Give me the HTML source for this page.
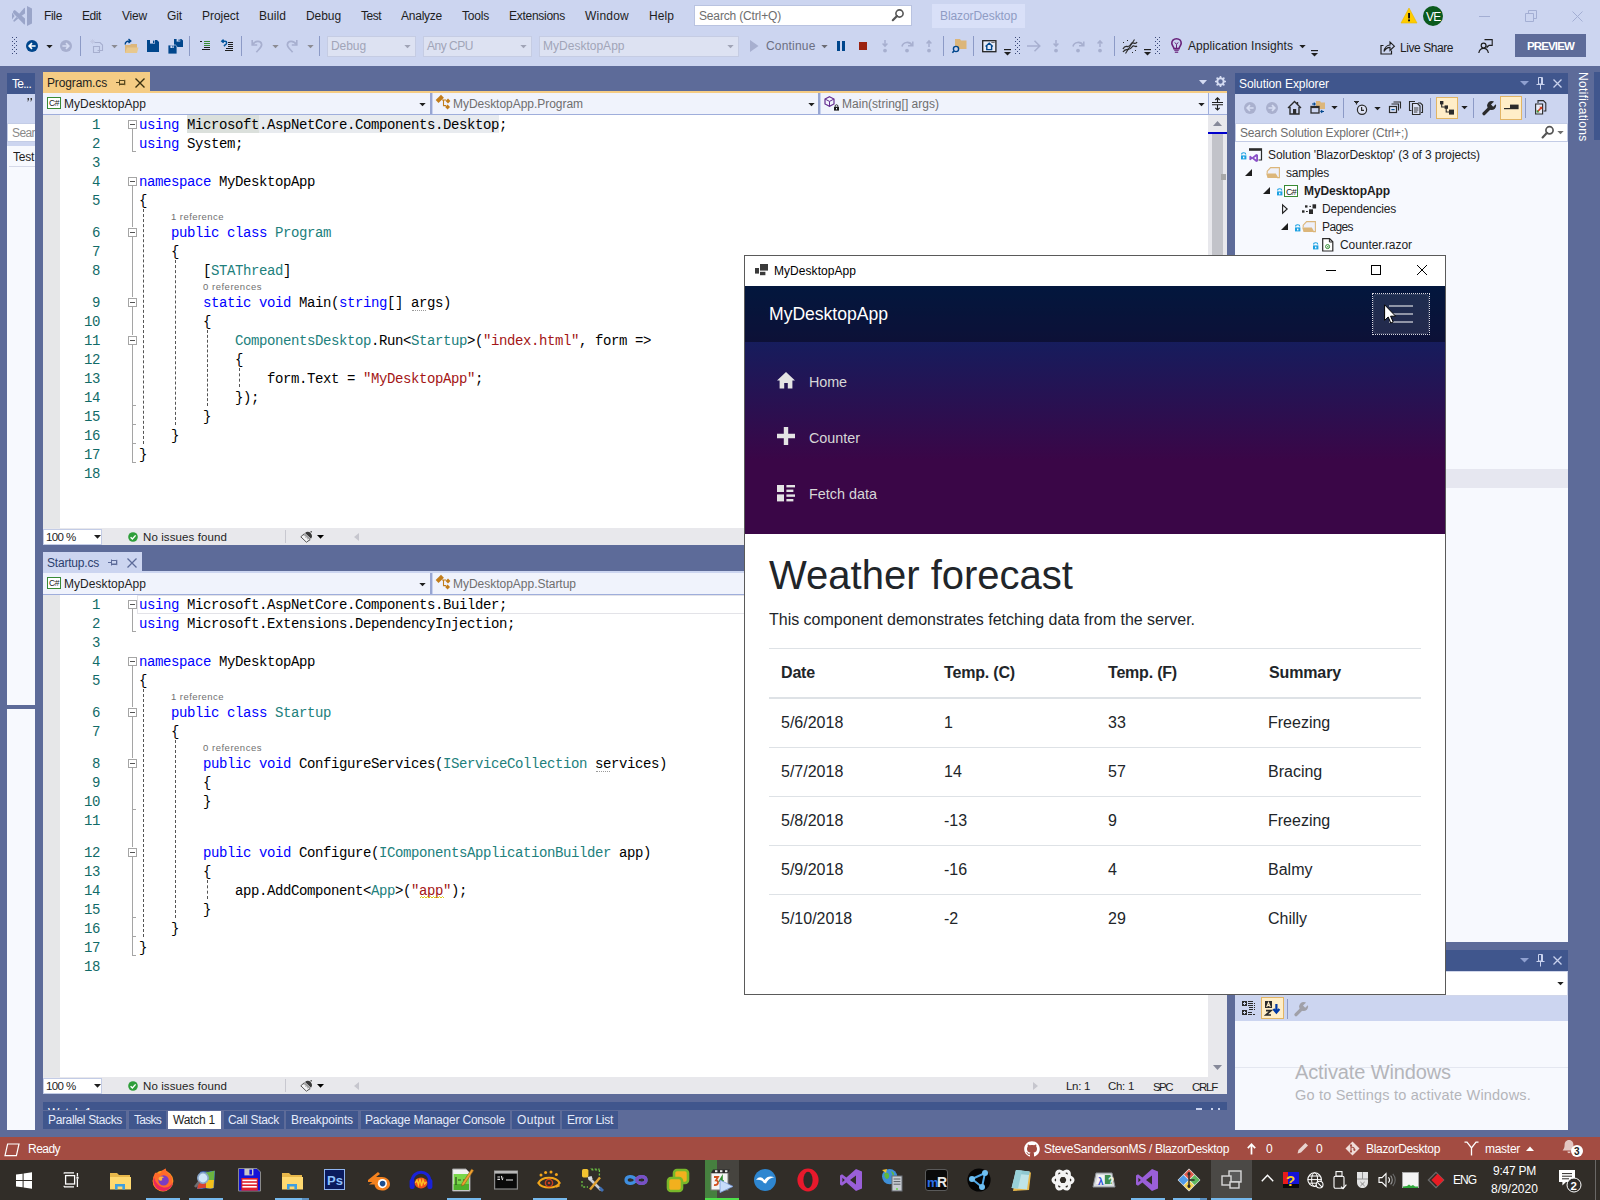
<!DOCTYPE html>
<html lang="en"><head><meta charset="utf-8"><title>BlazorDesktop - Microsoft Visual Studio</title>
<style>
*{margin:0;padding:0}
html,body{width:1600px;height:1200px;overflow:hidden}
body{background:#5D6B99;font-family:"Liberation Sans",sans-serif;font-size:12px;position:relative}
div,span.t,svg{position:absolute}
span.t{white-space:pre}
svg{overflow:visible}
span.c{font-family:"Liberation Mono",monospace;font-size:14px;line-height:18px;letter-spacing:-0.401px;color:#000}
</style></head>
<body>
<div style="left:0px;top:0px;width:1600px;height:66px;background:#CCD5F0;"></div>
<svg style="left:11px;top:5px;" width="22" height="22" viewBox="0 0 22 22"><g fill="#9AA5C9"><path d="M16 1 L21 3.5 V18.5 L16 21 Z"/><path d="M2.2 6 L3.8 5 L14 13.6 V19.2 L13.2 19.6 L2 8 Z"/><path d="M13.4 2.8 L14 3.2 V8.6 L10.4 11 L8 9 Z"/><path d="M5.4 12 L7.2 13.6 L3.4 16.8 L2 16 Z"/><path d="M1 7.6 L3.6 11 L1 14.4 Z"/></g></svg>
<span class="t" style="left:44px;top:8.00px;font-size:12px;line-height:16px;color:#1E1E1E;letter-spacing:-0.334px;">File</span>
<span class="t" style="left:82px;top:8.00px;font-size:12px;line-height:16px;color:#1E1E1E;letter-spacing:-0.419px;">Edit</span>
<span class="t" style="left:122px;top:8.00px;font-size:12px;line-height:16px;color:#1E1E1E;letter-spacing:-0.198px;">View</span>
<span class="t" style="left:167px;top:8.00px;font-size:12px;line-height:16px;color:#1E1E1E;letter-spacing:-0.111px;">Git</span>
<span class="t" style="left:202px;top:8.00px;font-size:12px;line-height:16px;color:#1E1E1E;letter-spacing:-0.050px;">Project</span>
<span class="t" style="left:259px;top:8.00px;font-size:12px;line-height:16px;color:#1E1E1E;letter-spacing:0.063px;">Build</span>
<span class="t" style="left:306px;top:8.00px;font-size:12px;line-height:16px;color:#1E1E1E;letter-spacing:-0.072px;">Debug</span>
<span class="t" style="left:361px;top:8.00px;font-size:12px;line-height:16px;color:#1E1E1E;letter-spacing:-0.502px;">Test</span>
<span class="t" style="left:401px;top:8.00px;font-size:12px;line-height:16px;color:#1E1E1E;letter-spacing:-0.242px;">Analyze</span>
<span class="t" style="left:462px;top:8.00px;font-size:12px;line-height:16px;color:#1E1E1E;letter-spacing:-0.203px;">Tools</span>
<span class="t" style="left:509px;top:8.00px;font-size:12px;line-height:16px;color:#1E1E1E;letter-spacing:-0.270px;">Extensions</span>
<span class="t" style="left:585px;top:8.00px;font-size:12px;line-height:16px;color:#1E1E1E;letter-spacing:0.220px;">Window</span>
<span class="t" style="left:649px;top:8.00px;font-size:12px;line-height:16px;color:#1E1E1E;letter-spacing:0.080px;">Help</span>
<div style="left:694px;top:5px;width:218px;height:21px;background:#fff;border:1px solid #B9C3E0;box-sizing:border-box;"></div>
<span class="t" style="left:699px;top:8.00px;font-size:12px;line-height:16px;color:#6E6E6E;letter-spacing:-0.157px;">Search (Ctrl+Q)</span>
<svg style="left:891px;top:8px;" width="14" height="14" viewBox="0 0 14 14"><circle cx="8.5" cy="5.5" r="3.6" fill="none" stroke="#555" stroke-width="1.6"/><path d="M6 8 L1.8 12.2" stroke="#555" stroke-width="2.2" stroke-linecap="round"/></svg>
<div style="left:932px;top:4px;width:93px;height:24px;background:#D9E0F8;"></div>
<span class="t" style="left:940px;top:8.00px;font-size:12px;line-height:16px;color:#8F9CC4;letter-spacing:-0.080px;">BlazorDesktop</span>
<svg style="left:1400px;top:7px;" width="18" height="17" viewBox="0 0 18 17"><path d="M9 1 L17 16 H1 Z" fill="#FFCC00" stroke="#E8B800" stroke-width="0.6"/><rect x="8.1" y="6" width="1.9" height="5.4" fill="#111"/><rect x="8.1" y="12.4" width="1.9" height="1.9" fill="#111"/></svg>
<div style="left:1423px;top:6px;width:20px;height:20px;background:#0B5A1D;border-radius:50%;"></div>
<span class="t" style="left:1426px;top:8.50px;font-size:12px;line-height:16px;color:#fff;letter-spacing:-0.754px;">VE</span>
<div style="left:1479px;top:16px;width:11px;height:1px;background:#A3AED3;"></div>
<svg style="left:1525px;top:10px;" width="12" height="12" viewBox="0 0 12 12"><path d="M0.5 3.5 H8.5 V11.5 H0.5 Z M3.5 3.5 V0.5 H11.5 V8.5 H8.5" fill="none" stroke="#A3AED3" stroke-width="1"/></svg>
<svg style="left:1572px;top:11px;" width="12" height="12" viewBox="0 0 12 12"><path d="M0.5 0.5 L10.5 10.5 M10.5 0.5 L0.5 10.5" stroke="#A3AED3" stroke-width="1"/></svg>
<svg style="left:12px;top:37px;" width="6" height="18" viewBox="0 0 6 18"><g fill="#3B4A7A"><rect x="0" y="0" width="1" height="1"/><rect x="4" y="0" width="1" height="1"/><rect x="2" y="2" width="1" height="1"/><rect x="2" y="2" width="1" height="1"/><rect x="0" y="4" width="1" height="1"/><rect x="4" y="4" width="1" height="1"/><rect x="2" y="6" width="1" height="1"/><rect x="2" y="6" width="1" height="1"/><rect x="0" y="8" width="1" height="1"/><rect x="4" y="8" width="1" height="1"/><rect x="2" y="10" width="1" height="1"/><rect x="2" y="10" width="1" height="1"/><rect x="0" y="12" width="1" height="1"/><rect x="4" y="12" width="1" height="1"/><rect x="2" y="14" width="1" height="1"/><rect x="2" y="14" width="1" height="1"/><rect x="0" y="16" width="1" height="1"/><rect x="4" y="16" width="1" height="1"/></g></svg>
<svg style="left:26px;top:40px;" width="12" height="12" viewBox="0 0 12 12"><circle cx="6" cy="6" r="6" fill="#00468C"/><path d="M9.6 6 H3.6 M6 3.2 L3.2 6 L6 8.8" stroke="#fff" stroke-width="1.7" fill="none"/></svg>
<svg style="left:46px;top:45px;" width="7" height="4" viewBox="0 0 7 4"><path d="M0.3 0 H6.7 L3.5 3.3 Z" fill="#1E1E1E"/></svg>
<svg style="left:60px;top:40px;" width="12" height="12" viewBox="0 0 12 12"><circle cx="6" cy="6" r="6" fill="#A7AFCF"/><path d="M2.4 6 H8.4 M6 3.2 L8.8 6 L6 8.8" stroke="#D6DDF3" stroke-width="1.7" fill="none"/></svg>
<div style="left:80px;top:36px;width:1px;height:20px;background:#8C9AC6;"></div>
<svg style="left:90px;top:39px;" width="15" height="15" viewBox="0 0 15 15"><path d="M4.5 3.5 H10 L12.5 6 V11.5 H7.5" fill="none" stroke="#A7AFCF" stroke-width="1.1"/><path d="M3.5 7.5 H9.5 V13.5 H3.5 Z" fill="none" stroke="#A7AFCF" stroke-width="1.1"/><path d="M2.5 0 V5 M0 2.5 H5 M0.8 0.8 L4.2 4.2 M4.2 0.8 L0.8 4.2" stroke="#C0C7E2" stroke-width="0.8"/></svg>
<svg style="left:111px;top:45px;" width="7" height="4" viewBox="0 0 7 4"><path d="M0.3 0 H6.7 L3.5 3.3 Z" fill="#8B8B93"/></svg>
<svg style="left:124px;top:39px;" width="15" height="15" viewBox="0 0 15 15"><path d="M1 14 V6 H6 L7 5 H13 V14 Z" fill="#DCB67A"/><path d="M1 14 L3 8.5 H14.5 L13 14 Z" fill="#E8C88E"/><path d="M1.2 5.5 C1 2.5 3.5 1.8 6 2 M4.5 0 L6.8 2 L4.5 4" fill="none" stroke="#00468C" stroke-width="1.4"/></svg>
<svg style="left:147px;top:40px;" width="12" height="12" viewBox="0 0 12 12"><path d="M0 0 H10 L12 2 V12 H0 Z" fill="#00468C"/><rect x="3" y="0" width="5" height="3.6" fill="#CCD5F0"/><rect x="6" y="0.6" width="1.4" height="2.4" fill="#00468C"/></svg>
<svg style="left:168px;top:39px;" width="15" height="15" viewBox="0 0 15 15"><path d="M6 0 H13.4 L15 1.6 V8 H6 Z" fill="#00468C"/><rect x="8.6" y="0" width="3.6" height="2.6" fill="#CCD5F0"/><rect x="10.6" y="0.4" width="1" height="1.8" fill="#00468C"/><path d="M0 6 H7.4 L9 7.6 V15 H0 Z" fill="#00468C" stroke="#CCD5F0" stroke-width="0.8"/><rect x="2.4" y="6.4" width="3.6" height="2.6" fill="#CCD5F0"/><rect x="4.4" y="6.8" width="1" height="1.8" fill="#00468C"/></svg>
<div style="left:189px;top:36px;width:1px;height:20px;background:#8C9AC6;"></div>
<svg style="left:200px;top:41px;" width="11" height="10" viewBox="0 0 11 10"><g fill="#1E1E1E"><rect x="0" y="0" width="2" height="1"/><rect x="2" y="8" width="8" height="1"/><rect x="4" y="6" width="6" height="1"/></g><g fill="#388A34"><rect x="4" y="0" width="6" height="1"/><rect x="4" y="2" width="6" height="1"/><rect x="4" y="4" width="6" height="1"/></g></svg>
<svg style="left:221px;top:40px;" width="13" height="12" viewBox="0 0 13 12"><g fill="#1E1E1E"><rect x="7" y="2" width="5" height="1"/><rect x="7" y="4" width="5" height="1"/><rect x="7" y="6" width="5" height="1"/><rect x="5" y="8" width="7" height="1"/><rect x="4" y="10" width="8" height="1"/></g><path d="M1 1.2 H4 C6.2 1.2 6.2 4.2 4 5 L3 6.2 M2.6 -0.4 L0.8 1.2 L2.6 2.8" fill="none" stroke="#00539C" stroke-width="1.5"/></svg>
<div style="left:241px;top:36px;width:1px;height:20px;background:#8C9AC6;"></div>
<svg style="left:251px;top:39px;" width="13" height="14" viewBox="0 0 13 14"><path d="M1.2 1 V6 H6.2" fill="none" stroke="#A7AFCF" stroke-width="1.6"/><path d="M1.6 5.6 C4 1.6 10 1.2 10.6 5.4 C11 8 8 10 5.4 13.2" fill="none" stroke="#A7AFCF" stroke-width="1.7"/></svg>
<svg style="left:272px;top:45px;" width="7" height="4" viewBox="0 0 7 4"><path d="M0.3 0 H6.7 L3.5 3.3 Z" fill="#8B8B93"/></svg>
<svg style="left:285px;top:39px;" width="13" height="14" viewBox="0 0 13 14"><path d="M11.8 1 V6 H6.8" fill="none" stroke="#A7AFCF" stroke-width="1.6"/><path d="M11.4 5.6 C9 1.6 3 1.2 2.4 5.4 C2 8 5 10 7.6 13.2" fill="none" stroke="#A7AFCF" stroke-width="1.7"/></svg>
<svg style="left:307px;top:45px;" width="7" height="4" viewBox="0 0 7 4"><path d="M0.3 0 H6.7 L3.5 3.3 Z" fill="#8B8B93"/></svg>
<div style="left:319px;top:36px;width:1px;height:20px;background:#8C9AC6;"></div>
<div style="left:327px;top:36px;width:89px;height:21px;background:#DDE2F2;border:1px solid #C5CCE3;box-sizing:border-box;"></div>
<span class="t" style="left:331px;top:38.00px;font-size:12px;line-height:16px;color:#A1A5B8;letter-spacing:-0.072px;">Debug</span>
<svg style="left:404px;top:45px;" width="7" height="4" viewBox="0 0 7 4"><path d="M0.3 0 H6.7 L3.5 3.3 Z" fill="#A0A4B6"/></svg>
<div style="left:423px;top:36px;width:109px;height:21px;background:#DDE2F2;border:1px solid #C5CCE3;box-sizing:border-box;"></div>
<span class="t" style="left:427px;top:38.00px;font-size:12px;line-height:16px;color:#A1A5B8;letter-spacing:-0.478px;">Any CPU</span>
<svg style="left:520px;top:45px;" width="7" height="4" viewBox="0 0 7 4"><path d="M0.3 0 H6.7 L3.5 3.3 Z" fill="#A0A4B6"/></svg>
<div style="left:539px;top:36px;width:200px;height:21px;background:#DDE2F2;border:1px solid #C5CCE3;box-sizing:border-box;"></div>
<span class="t" style="left:543px;top:38.00px;font-size:12px;line-height:16px;color:#A1A5B8;letter-spacing:0.011px;">MyDesktopApp</span>
<svg style="left:727px;top:45px;" width="7" height="4" viewBox="0 0 7 4"><path d="M0.3 0 H6.7 L3.5 3.3 Z" fill="#A0A4B6"/></svg>
<svg style="left:750px;top:40px;" width="9" height="12" viewBox="0 0 9 12"><path d="M0 0 L8.5 6 L0 12 Z" fill="#A7AFCF"/></svg>
<span class="t" style="left:766px;top:38.00px;font-size:12px;line-height:16px;color:#6B6F83;letter-spacing:0.183px;">Continue</span>
<svg style="left:821px;top:45px;" width="7" height="4" viewBox="0 0 7 4"><path d="M0.3 0 H6.7 L3.5 3.3 Z" fill="#6B6B73"/></svg>
<div style="left:837px;top:41px;width:3px;height:10px;background:#00468C;"></div>
<div style="left:842px;top:41px;width:3px;height:10px;background:#00468C;"></div>
<div style="left:859px;top:42px;width:8px;height:8px;background:#9B2210;"></div>
<svg style="left:882px;top:40px;" width="6" height="13" viewBox="0 0 6 13"><path d="M3 0 V6 M0.6 3.6 L3 6.2 L5.4 3.6" fill="none" stroke="#A7AFCF" stroke-width="1.5"/><circle cx="3" cy="10.6" r="1.9" fill="#A7AFCF"/></svg>
<svg style="left:901px;top:40px;" width="13" height="13" viewBox="0 0 13 13"><path d="M1 6.5 C2 1.5 9 1 11 5.4" fill="none" stroke="#A7AFCF" stroke-width="1.6"/><path d="M7 5.8 H11.8 V1.4" fill="none" stroke="#A7AFCF" stroke-width="1.5"/><circle cx="6" cy="10.6" r="1.9" fill="#A7AFCF"/></svg>
<svg style="left:926px;top:40px;" width="6" height="13" viewBox="0 0 6 13"><path d="M3 7 V1 M0.6 3.4 L3 0.8 L5.4 3.4" fill="none" stroke="#A7AFCF" stroke-width="1.5"/><circle cx="3" cy="10.6" r="1.9" fill="#A7AFCF"/></svg>
<div style="left:943px;top:36px;width:1px;height:20px;background:#8C9AC6;"></div>
<svg style="left:952px;top:39px;" width="15" height="15" viewBox="0 0 15 15"><path d="M3 0 H8 L9 1.4 H14.5 V10 H3 Z" fill="#DCB67A"/><circle cx="4" cy="10" r="2.6" fill="#CCD5F0" stroke="#00468C" stroke-width="1.4"/><path d="M2.2 11.8 L0.4 13.8" stroke="#00468C" stroke-width="1.6"/></svg>
<div style="left:973px;top:36px;width:1px;height:20px;background:#8C9AC6;"></div>
<svg style="left:982px;top:40px;" width="15" height="13" viewBox="0 0 15 13"><rect x="0.7" y="0.7" width="13.2" height="11" fill="#E8ECF8" stroke="#222" stroke-width="1.3"/><path d="M3.6 6.4 L7.2 3.2 L10.8 6.4 M4.8 6 V9.6 H9.6 V6" fill="none" stroke="#00468C" stroke-width="1.4"/><rect x="9.6" y="2" width="1" height="1" fill="#222"/><rect x="11.4" y="2" width="1" height="1" fill="#222"/></svg>
<svg style="left:1004px;top:49px;" width="7" height="7" viewBox="0 0 7 7"><rect x="0" y="0" width="7" height="1.2" fill="#1E1E1E"/><path d="M0 3 H7 L3.5 6.6 Z" fill="#1E1E1E"/></svg>
<svg style="left:1015px;top:37px;" width="6" height="18" viewBox="0 0 6 18"><g fill="#3B4A7A"><rect x="0" y="0" width="1" height="1"/><rect x="4" y="0" width="1" height="1"/><rect x="2" y="2" width="1" height="1"/><rect x="2" y="2" width="1" height="1"/><rect x="0" y="4" width="1" height="1"/><rect x="4" y="4" width="1" height="1"/><rect x="2" y="6" width="1" height="1"/><rect x="2" y="6" width="1" height="1"/><rect x="0" y="8" width="1" height="1"/><rect x="4" y="8" width="1" height="1"/><rect x="2" y="10" width="1" height="1"/><rect x="2" y="10" width="1" height="1"/><rect x="0" y="12" width="1" height="1"/><rect x="4" y="12" width="1" height="1"/><rect x="2" y="14" width="1" height="1"/><rect x="2" y="14" width="1" height="1"/><rect x="0" y="16" width="1" height="1"/><rect x="4" y="16" width="1" height="1"/></g></svg>
<svg style="left:1027px;top:40px;" width="14" height="12" viewBox="0 0 14 12"><path d="M0 6 H12.5 M7.5 0.8 L12.8 6 L7.5 11.2" fill="none" stroke="#A7AFCF" stroke-width="1.5"/></svg>
<svg style="left:1053px;top:40px;" width="6" height="13" viewBox="0 0 6 13"><path d="M3 0 V6 M0.6 3.6 L3 6.2 L5.4 3.6" fill="none" stroke="#A7AFCF" stroke-width="1.5"/><circle cx="3" cy="10.6" r="1.9" fill="#A7AFCF"/></svg>
<svg style="left:1072px;top:40px;" width="13" height="13" viewBox="0 0 13 13"><path d="M1 6.5 C2 1.5 9 1 11 5.4" fill="none" stroke="#A7AFCF" stroke-width="1.6"/><path d="M7 5.8 H11.8 V1.4" fill="none" stroke="#A7AFCF" stroke-width="1.5"/><circle cx="6" cy="10.6" r="1.9" fill="#A7AFCF"/></svg>
<svg style="left:1097px;top:40px;" width="6" height="13" viewBox="0 0 6 13"><path d="M3 7 V1 M0.6 3.4 L3 0.8 L5.4 3.4" fill="none" stroke="#A7AFCF" stroke-width="1.5"/><circle cx="3" cy="10.6" r="1.9" fill="#A7AFCF"/></svg>
<div style="left:1114px;top:36px;width:1px;height:20px;background:#8C9AC6;"></div>
<svg style="left:1122px;top:39px;" width="16" height="15" viewBox="0 0 16 15"><path d="M1 10 C4 4 6 11 9 5 C11 1.5 13 7 15 3" fill="none" stroke="#2B2B2B" stroke-width="1.3"/><path d="M1 13 C4 8 7 13 10 8 C12 5 13 9 15 7" fill="none" stroke="#2B2B2B" stroke-width="1.3"/><path d="M3.5 14.5 L12.5 0.5" stroke="#2B2B2B" stroke-width="1.1"/><g fill="#2B2B2B"><rect x="1" y="3" width="1" height="1"/><rect x="13" y="11" width="1" height="1"/><rect x="5" y="1" width="1" height="1"/><rect x="10" y="13" width="1" height="1"/></g></svg>
<svg style="left:1144px;top:49px;" width="7" height="7" viewBox="0 0 7 7"><rect x="0" y="0" width="7" height="1.2" fill="#1E1E1E"/><path d="M0 3 H7 L3.5 6.6 Z" fill="#1E1E1E"/></svg>
<svg style="left:1155px;top:37px;" width="6" height="18" viewBox="0 0 6 18"><g fill="#3B4A7A"><rect x="0" y="0" width="1" height="1"/><rect x="4" y="0" width="1" height="1"/><rect x="2" y="2" width="1" height="1"/><rect x="2" y="2" width="1" height="1"/><rect x="0" y="4" width="1" height="1"/><rect x="4" y="4" width="1" height="1"/><rect x="2" y="6" width="1" height="1"/><rect x="2" y="6" width="1" height="1"/><rect x="0" y="8" width="1" height="1"/><rect x="4" y="8" width="1" height="1"/><rect x="2" y="10" width="1" height="1"/><rect x="2" y="10" width="1" height="1"/><rect x="0" y="12" width="1" height="1"/><rect x="4" y="12" width="1" height="1"/><rect x="2" y="14" width="1" height="1"/><rect x="2" y="14" width="1" height="1"/><rect x="0" y="16" width="1" height="1"/><rect x="4" y="16" width="1" height="1"/></g></svg>
<svg style="left:1171px;top:38px;" width="11" height="16" viewBox="0 0 11 16"><path d="M5.5 0.8 C8.6 0.8 10.2 3 10.2 5.2 C10.2 7.4 8.4 8.4 8 10.6 H3 C2.6 8.4 0.8 7.4 0.8 5.2 C0.8 3 2.4 0.8 5.5 0.8 Z" fill="none" stroke="#68217A" stroke-width="1.6"/><path d="M3.8 4.4 L5.5 6.4 L7.2 4.4 M5.5 6.4 V10" fill="none" stroke="#68217A" stroke-width="1"/><rect x="3.2" y="11.6" width="4.6" height="1.2" fill="#68217A"/><rect x="3.8" y="13.6" width="3.4" height="1.2" fill="#68217A"/></svg>
<span class="t" style="left:1188px;top:38.00px;font-size:12px;line-height:16px;color:#1E1E1E;letter-spacing:0.080px;">Application Insights</span>
<svg style="left:1299px;top:45px;" width="7" height="4" viewBox="0 0 7 4"><path d="M0.3 0 H6.7 L3.5 3.3 Z" fill="#1E1E1E"/></svg>
<svg style="left:1311px;top:50px;" width="7" height="7" viewBox="0 0 7 7"><rect x="0" y="0" width="7" height="1.2" fill="#1E1E1E"/><path d="M0 3 H7 L3.5 6.6 Z" fill="#1E1E1E"/></svg>
<svg style="left:1380px;top:40px;" width="15" height="15" viewBox="0 0 15 15"><path d="M3.5 5.5 H1 V14 H11.5 V10.5" fill="none" stroke="#1E1E1E" stroke-width="1.2"/><path d="M4 11.5 C4.5 7 7.5 5 10 5 V2 L14.4 6.2 L10 10.4 V7.4 C8 7.4 5.6 8.4 4 11.5 Z" fill="none" stroke="#1E1E1E" stroke-width="1.1"/></svg>
<span class="t" style="left:1400px;top:40.00px;font-size:12px;line-height:16px;color:#1E1E1E;letter-spacing:-0.437px;">Live Share</span>
<svg style="left:1478px;top:39px;" width="15" height="15" viewBox="0 0 15 15"><path d="M6.5 0.6 H14.2 V6.4 H11 L9 8.4 V6.4" fill="none" stroke="#1E1E1E" stroke-width="1.1"/><circle cx="5.6" cy="6.6" r="2.4" fill="none" stroke="#1E1E1E" stroke-width="1.2"/><path d="M0.8 14 C1.6 10 4 9.4 5.6 9.4 C7.2 9.4 9.6 10 10.4 14" fill="none" stroke="#1E1E1E" stroke-width="1.2"/></svg>
<div style="left:1515px;top:34px;width:71px;height:23px;background:#5D6B99;"></div>
<span class="t" style="left:1527px;top:39.00px;font-size:11.5px;line-height:14px;color:#fff;font-family:'Liberation Sans',sans-serif;font-weight:bold;letter-spacing:-0.862px;">PREVIEW</span>
<div style="left:7px;top:73px;width:28px;height:21px;background:#40568D;"></div>
<span class="t" style="left:12px;top:76.00px;font-size:12px;line-height:16px;color:#fff;letter-spacing:-0.735px;">Te...</span>
<div style="left:7px;top:94px;width:28px;height:1036px;background:#F7F9FE;"></div>
<div style="left:7px;top:94px;width:28px;height:29px;background:#CCD5F0;"></div>
<svg style="left:27px;top:98px;" width="6" height="4" viewBox="0 0 6 4"><path d="M0.5 0 H2 V1.6 L1 3.4 H0.4 L1 1.8 H0.5 Z M3.5 0 H5 V1.6 L4 3.4 H3.4 L4 1.8 H3.5 Z" fill="#333"/></svg>
<div style="left:7px;top:123px;width:28px;height:19px;background:#fff;border:1px solid #C3CCE6;border-right:0;box-sizing:border-box;"></div>
<span class="t" style="left:12px;top:125.00px;font-size:12px;line-height:16px;color:#8A8A8A;letter-spacing:-0.587px;overflow:hidden;width:23px;">Sear</span>
<div style="left:7px;top:142px;width:28px;height:4px;background:#CCD5F0;"></div>
<div style="left:7px;top:146px;width:28px;height:20px;background:#F7F9FE;"></div>
<span class="t" style="left:13px;top:149.00px;font-size:12px;line-height:16px;color:#1E1E1E;letter-spacing:-0.252px;overflow:hidden;width:22px;">Test</span>
<div style="left:9px;top:166px;width:26px;height:1px;background:#D5D9E8;"></div>
<div style="left:7px;top:705px;width:28px;height:4px;background:#5D6B99;"></div>
<div style="left:43px;top:72px;width:107px;height:20px;background:#F5CC84;"></div>
<span class="t" style="left:47px;top:75.00px;font-size:12px;line-height:16px;color:#1E1E1E;letter-spacing:-0.135px;">Program.cs</span>
<svg style="left:116px;top:78px;" width="10" height="9" viewBox="0 0 10 9"><path d="M0 4.5 H3.4 M3.5 1.5 V7.5 M3.5 2.5 H8.5 V6 H3.5 M3.5 6.5 H8.5 M8.8 1.8 V7.2" fill="none" stroke="#5A4A20" stroke-width="1"/></svg>
<svg style="left:135px;top:77.5px;" width="10" height="10" viewBox="0 0 10 10"><path d="M0.5 0.5 L9.5 9.5 M9.5 0.5 L0.5 9.5" stroke="#3A3010" stroke-width="1.4"/></svg>
<div style="left:43px;top:91px;width:1184px;height:2px;background:#F5CC84;"></div>
<svg style="left:1199px;top:80px;" width="8" height="5" viewBox="0 0 8 5"><path d="M0 0 H8 L4 4.5 Z" fill="#D5DCF2"/></svg>
<svg style="left:1215px;top:76px;" width="11" height="11" viewBox="0 0 11 11"><circle cx="5.5" cy="5.5" r="3.2" fill="none" stroke="#D5DCF2" stroke-width="2"/><g stroke="#D5DCF2" stroke-width="1.6"><path d="M5.5 0 V2 M5.5 9 V11 M0 5.5 H2 M9 5.5 H11 M1.6 1.6 L3 3 M8 8 L9.4 9.4 M9.4 1.6 L8 3 M3 8 L1.6 9.4"/></g></svg>
<div style="left:43px;top:93px;width:1184px;height:21px;background:#F0F3FC;"></div>
<div style="left:43px;top:114px;width:1184px;height:1px;background:#9FAEDB;"></div>
<div style="left:47px;top:97px;width:14px;height:12px;background:#fff;border:1px solid #388A34;box-sizing:border-box;"></div>
<span class="t" style="left:49px;top:97.00px;font-size:8.5px;line-height:12px;color:#222;letter-spacing:-0.433px;">C#</span>
<span class="t" style="left:64px;top:96.00px;font-size:12px;line-height:16px;color:#1E1E1E;letter-spacing:0.053px;">MyDesktopApp</span>
<svg style="left:436px;top:94px;" width="16" height="17" viewBox="0 0 16 17"><g fill="#C27D1A"><path d="M5 0.7 L7.9 3.8 L2.5 9.1 L-0.3 6 Z"/><path d="M12 4.6 L14.4 7 L12 9.4 L9.6 7 Z"/><path d="M11.6 10.5 L14 13 L11.6 15.5 L9.2 13 Z"/></g><path d="M6 6 H10 M7.5 6 V11.6 H10" fill="none" stroke="#C27D1A" stroke-width="1.1"/></svg>
<span class="t" style="left:453px;top:96.00px;font-size:12px;line-height:16px;color:#6E6E6E;letter-spacing:-0.036px;">MyDesktopApp.Program</span>
<svg style="left:824px;top:96px;" width="16" height="15" viewBox="0 0 16 15"><path d="M5.5 0.7 L10 3 V8 L5.5 10.4 L1 8 V3 Z" fill="none" stroke="#652D90" stroke-width="1.2"/><path d="M1 3 L5.5 5.4 L10 3 M5.5 5.4 V10.4" fill="none" stroke="#652D90" stroke-width="1"/><rect x="10" y="10.8" width="5" height="3.8" fill="#1E1E1E"/><path d="M11.2 10.8 V9.8 C11.2 8.4 13.8 8.4 13.8 9.8 V10.8" fill="none" stroke="#1E1E1E" stroke-width="0.9"/><rect x="12" y="12" width="1" height="1.4" fill="#F0F3FC"/></svg>
<span class="t" style="left:842px;top:96.00px;font-size:12px;line-height:16px;color:#6E6E6E;letter-spacing:0.016px;">Main(string[] args)</span>
<svg style="left:419px;top:103px;" width="7" height="4" viewBox="0 0 7 4"><path d="M0.3 0 H6.7 L3.5 3.3 Z" fill="#1E1E1E"/></svg>
<svg style="left:808px;top:103px;" width="7" height="4" viewBox="0 0 7 4"><path d="M0.3 0 H6.7 L3.5 3.3 Z" fill="#1E1E1E"/></svg>
<svg style="left:1198px;top:103px;" width="7" height="4" viewBox="0 0 7 4"><path d="M0.3 0 H6.7 L3.5 3.3 Z" fill="#1E1E1E"/></svg>
<div style="left:430px;top:93px;width:3px;height:21px;background:#98A6D2;"></div>
<div style="left:432px;top:93px;width:1px;height:21px;background:#C8D2EE;"></div>
<div style="left:818px;top:93px;width:3px;height:21px;background:#98A6D2;"></div>
<div style="left:820px;top:93px;width:1px;height:21px;background:#C8D2EE;"></div>
<div style="left:1208px;top:93px;width:19px;height:21px;background:#E8EDFC;border-left:1px solid #9FAEDB;box-sizing:border-box;"></div>
<svg style="left:1212px;top:97px;" width="11" height="14" viewBox="0 0 11 14"><path d="M0 5.5 H11 M0 7.8 H11 M5.5 0.8 V5 M5.5 8 V13 M3.3 3 L5.5 0.8 L7.7 3 M3.3 10.8 L5.5 13 L7.7 10.8" fill="none" stroke="#1E1E1E" stroke-width="1.1"/></svg>
<div style="left:43px;top:115px;width:1184px;height:413px;background:#fff;"></div>
<div style="left:43px;top:115px;width:17px;height:413px;background:#E6E7E8;"></div>
<div style="left:1208px;top:115px;width:19px;height:413px;background:#E8E8EC;"></div>
<div style="left:187px;top:115px;width:312px;height:18px;background:#E8EBEF;"></div>
<div style="left:187px;top:115px;width:72px;height:18px;background:#DBE0DC;"></div>
<span class="t" style="left:92.0px;top:115.50px;font-size:14px;line-height:18px;color:#116B68;font-family:'Liberation Mono',monospace;letter-spacing:-0.401px;">1</span>
<span class="t c" style="left:139.0px;top:115.77px"><span style="color:#0000FF">using</span> Microsoft.AspNetCore.Components.Desktop;</span>
<span class="t" style="left:92.0px;top:134.50px;font-size:14px;line-height:18px;color:#116B68;font-family:'Liberation Mono',monospace;letter-spacing:-0.401px;">2</span>
<span class="t c" style="left:139.0px;top:134.77px"><span style="color:#0000FF">using</span> System;</span>
<span class="t" style="left:92.0px;top:153.50px;font-size:14px;line-height:18px;color:#116B68;font-family:'Liberation Mono',monospace;letter-spacing:-0.401px;">3</span>
<span class="t" style="left:92.0px;top:172.50px;font-size:14px;line-height:18px;color:#116B68;font-family:'Liberation Mono',monospace;letter-spacing:-0.401px;">4</span>
<span class="t c" style="left:139.0px;top:172.77px"><span style="color:#0000FF">namespace</span> MyDesktopApp</span>
<span class="t" style="left:92.0px;top:191.50px;font-size:14px;line-height:18px;color:#116B68;font-family:'Liberation Mono',monospace;letter-spacing:-0.401px;">5</span>
<span class="t c" style="left:139.0px;top:191.77px">{</span>
<span class="t" style="left:171px;top:210.00px;font-size:9.5px;line-height:13px;color:#707070;letter-spacing:0.449px;">1 reference</span>
<span class="t" style="left:92.0px;top:223.50px;font-size:14px;line-height:18px;color:#116B68;font-family:'Liberation Mono',monospace;letter-spacing:-0.401px;">6</span>
<span class="t c" style="left:171.0px;top:223.77px"><span style="color:#0000FF">public</span> <span style="color:#0000FF">class</span> <span style="color:#21807C">Program</span></span>
<span class="t" style="left:92.0px;top:242.50px;font-size:14px;line-height:18px;color:#116B68;font-family:'Liberation Mono',monospace;letter-spacing:-0.401px;">7</span>
<span class="t c" style="left:171.0px;top:242.77px">{</span>
<span class="t" style="left:92.0px;top:261.50px;font-size:14px;line-height:18px;color:#116B68;font-family:'Liberation Mono',monospace;letter-spacing:-0.401px;">8</span>
<span class="t c" style="left:203.0px;top:261.77px">[<span style="color:#21807C">STAThread</span>]</span>
<span class="t" style="left:203px;top:280.00px;font-size:9.5px;line-height:13px;color:#707070;letter-spacing:0.516px;">0 references</span>
<span class="t" style="left:92.0px;top:293.50px;font-size:14px;line-height:18px;color:#116B68;font-family:'Liberation Mono',monospace;letter-spacing:-0.401px;">9</span>
<span class="t c" style="left:203.0px;top:293.77px"><span style="color:#0000FF">static</span> <span style="color:#0000FF">void</span> Main(<span style="color:#0000FF">string</span>[] args)</span>
<span class="t" style="left:84.0px;top:312.50px;font-size:14px;line-height:18px;color:#116B68;font-family:'Liberation Mono',monospace;letter-spacing:-0.401px;">10</span>
<span class="t c" style="left:203.0px;top:312.77px">{</span>
<span class="t" style="left:84.0px;top:331.50px;font-size:14px;line-height:18px;color:#116B68;font-family:'Liberation Mono',monospace;letter-spacing:-0.401px;">11</span>
<span class="t c" style="left:235.0px;top:331.77px"><span style="color:#21807C">ComponentsDesktop</span>.Run&lt;<span style="color:#21807C">Startup</span>&gt;(<span style="color:#A31515">&quot;index.html&quot;</span>, form =&gt;</span>
<span class="t" style="left:84.0px;top:350.50px;font-size:14px;line-height:18px;color:#116B68;font-family:'Liberation Mono',monospace;letter-spacing:-0.401px;">12</span>
<span class="t c" style="left:235.0px;top:350.77px">{</span>
<span class="t" style="left:84.0px;top:369.50px;font-size:14px;line-height:18px;color:#116B68;font-family:'Liberation Mono',monospace;letter-spacing:-0.401px;">13</span>
<span class="t c" style="left:267.0px;top:369.77px">form.Text = <span style="color:#A31515">&quot;MyDesktopApp&quot;</span>;</span>
<span class="t" style="left:84.0px;top:388.50px;font-size:14px;line-height:18px;color:#116B68;font-family:'Liberation Mono',monospace;letter-spacing:-0.401px;">14</span>
<span class="t c" style="left:235.0px;top:388.77px">});</span>
<span class="t" style="left:84.0px;top:407.50px;font-size:14px;line-height:18px;color:#116B68;font-family:'Liberation Mono',monospace;letter-spacing:-0.401px;">15</span>
<span class="t c" style="left:203.0px;top:407.77px">}</span>
<span class="t" style="left:84.0px;top:426.50px;font-size:14px;line-height:18px;color:#116B68;font-family:'Liberation Mono',monospace;letter-spacing:-0.401px;">16</span>
<span class="t c" style="left:171.0px;top:426.77px">}</span>
<span class="t" style="left:84.0px;top:445.50px;font-size:14px;line-height:18px;color:#116B68;font-family:'Liberation Mono',monospace;letter-spacing:-0.401px;">17</span>
<span class="t c" style="left:139.0px;top:445.77px">}</span>
<span class="t" style="left:84.0px;top:464.50px;font-size:14px;line-height:18px;color:#116B68;font-family:'Liberation Mono',monospace;letter-spacing:-0.401px;">18</span>
<div style="left:412px;top:310px;width:14px;height:0px;border-top:1px dotted #9A9A9A;"></div>
<div style="left:128px;top:120px;width:9px;height:9px;background:#fff;border:1px solid #A5A5A5;box-sizing:border-box;"></div>
<div style="left:130px;top:124px;width:5px;height:1px;background:#555;"></div>
<div style="left:128px;top:177px;width:9px;height:9px;background:#fff;border:1px solid #A5A5A5;box-sizing:border-box;"></div>
<div style="left:130px;top:181px;width:5px;height:1px;background:#555;"></div>
<div style="left:128px;top:228px;width:9px;height:9px;background:#fff;border:1px solid #A5A5A5;box-sizing:border-box;"></div>
<div style="left:130px;top:232px;width:5px;height:1px;background:#555;"></div>
<div style="left:128px;top:298px;width:9px;height:9px;background:#fff;border:1px solid #A5A5A5;box-sizing:border-box;"></div>
<div style="left:130px;top:302px;width:5px;height:1px;background:#555;"></div>
<div style="left:128px;top:336px;width:9px;height:9px;background:#fff;border:1px solid #A5A5A5;box-sizing:border-box;"></div>
<div style="left:130px;top:340px;width:5px;height:1px;background:#555;"></div>
<div style="left:132px;top:128px;width:1px;height:24px;background:#A5A5A5;"></div>
<div style="left:132px;top:151px;width:4px;height:1px;background:#A5A5A5;"></div>
<div style="left:132px;top:185px;width:1px;height:42px;background:#A5A5A5;"></div>
<div style="left:132px;top:236px;width:1px;height:61px;background:#A5A5A5;"></div>
<div style="left:132px;top:306px;width:1px;height:29px;background:#A5A5A5;"></div>
<div style="left:132px;top:344px;width:1px;height:119px;background:#A5A5A5;"></div>
<div style="left:132px;top:405px;width:4px;height:1px;background:#A5A5A5;"></div>
<div style="left:132px;top:424px;width:4px;height:1px;background:#A5A5A5;"></div>
<div style="left:132px;top:443px;width:4px;height:1px;background:#A5A5A5;"></div>
<div style="left:132px;top:462px;width:4px;height:1px;background:#A5A5A5;"></div>
<div style="left:143px;top:209px;width:0px;height:235px;border-left:1px dashed #555;"></div>
<div style="left:175px;top:260px;width:0px;height:165px;border-left:1px dashed #555;"></div>
<div style="left:207px;top:330px;width:0px;height:76px;border-left:1px dashed #555;"></div>
<div style="left:239px;top:368px;width:0px;height:19px;border-left:1px dashed #555;"></div>
<svg style="left:1213px;top:121px;" width="9" height="5" viewBox="0 0 9 5"><path d="M0 5 L4.5 0 L9 5 Z" fill="#868999"/></svg>
<div style="left:1208px;top:132px;width:19px;height:2px;background:#0000CC;"></div>
<div style="left:1212px;top:134px;width:11px;height:394px;background:#C2C3C9;"></div>
<div style="left:1221px;top:174px;width:5px;height:6px;background:#A8A8A8;"></div>
<div style="left:43px;top:528px;width:1184px;height:17px;background:#E8E8EC;"></div>
<div style="left:43px;top:529px;width:59px;height:16px;background:#fff;border:1px solid #C3CCE6;box-sizing:border-box;"></div>
<span class="t" style="left:46px;top:530.00px;font-size:11.5px;line-height:14px;color:#1E1E1E;letter-spacing:-0.622px;">100 %</span>
<svg style="left:94px;top:535px;" width="7" height="4" viewBox="0 0 7 4"><path d="M0 0 H7 L3.5 3.8 Z" fill="#1E1E1E"/></svg>
<svg style="left:128px;top:532px;" width="10" height="10" viewBox="0 0 10 10"><circle cx="5" cy="5" r="4.8" fill="#2E9E3A"/><path d="M2.6 5.2 L4.4 7 L7.6 3.4" fill="none" stroke="#fff" stroke-width="1.4"/></svg>
<span class="t" style="left:143px;top:530.00px;font-size:11.5px;line-height:14px;color:#1E1E1E;letter-spacing:0.102px;">No issues found</span>
<div style="left:285px;top:530px;width:1px;height:13px;background:#C8C8D0;"></div>
<svg style="left:300px;top:530px;" width="13" height="13" viewBox="0 0 13 13"><path d="M11.6 1.4 L9.4 3.6" stroke="#333" stroke-width="1.3" stroke-dasharray="1.2 0.6"/><path d="M5 3 A4.2 4.2 0 0 1 11 8.8 Z" fill="#3A3A3A"/><path d="M4.2 3.8 L10.2 9.6 L6.4 12.2 L0.8 6.8 Z" fill="#F6F6F8" stroke="#555" stroke-width="1"/><path d="M3.6 5 L9 10.4" stroke="#555" stroke-width="0.8" stroke-dasharray="1 0.8"/></svg>
<svg style="left:317px;top:535px;" width="7" height="4" viewBox="0 0 7 4"><path d="M0 0 H7 L3.5 3.8 Z" fill="#000"/></svg>
<svg style="left:354px;top:533px;" width="5" height="8" viewBox="0 0 5 8"><path d="M5 0 V8 L0 4 Z" fill="#C6C6CE"/></svg>
<div style="left:43px;top:552px;width:99px;height:20px;background:#CCD5F0;"></div>
<span class="t" style="left:47px;top:555.00px;font-size:12px;line-height:16px;color:#2B3F6E;letter-spacing:-0.202px;">Startup.cs</span>
<svg style="left:108px;top:558px;" width="10" height="9" viewBox="0 0 10 9"><path d="M0 4.5 H3.4 M3.5 1.5 V7.5 M3.5 2.5 H8.5 V6 H3.5 M3.5 6.5 H8.5 M8.8 1.8 V7.2" fill="none" stroke="#5D6B99" stroke-width="1"/></svg>
<svg style="left:127px;top:557.5px;" width="10" height="10" viewBox="0 0 10 10"><path d="M0.5 0.5 L9.5 9.5 M9.5 0.5 L0.5 9.5" stroke="#5D6B99" stroke-width="1.3"/></svg>
<div style="left:43px;top:571px;width:1184px;height:2px;background:#CCD5F0;"></div>
<div style="left:43px;top:573px;width:1184px;height:21px;background:#F0F3FC;"></div>
<div style="left:43px;top:594px;width:1184px;height:1px;background:#9FAEDB;"></div>
<div style="left:47px;top:577px;width:14px;height:12px;background:#fff;border:1px solid #388A34;box-sizing:border-box;"></div>
<span class="t" style="left:49px;top:577.00px;font-size:8.5px;line-height:12px;color:#222;letter-spacing:-0.433px;">C#</span>
<span class="t" style="left:64px;top:576.00px;font-size:12px;line-height:16px;color:#1E1E1E;letter-spacing:0.053px;">MyDesktopApp</span>
<svg style="left:436px;top:574px;" width="16" height="17" viewBox="0 0 16 17"><g fill="#C27D1A"><path d="M5 0.7 L7.9 3.8 L2.5 9.1 L-0.3 6 Z"/><path d="M12 4.6 L14.4 7 L12 9.4 L9.6 7 Z"/><path d="M11.6 10.5 L14 13 L11.6 15.5 L9.2 13 Z"/></g><path d="M6 6 H10 M7.5 6 V11.6 H10" fill="none" stroke="#C27D1A" stroke-width="1.1"/></svg>
<span class="t" style="left:453px;top:576.00px;font-size:12px;line-height:16px;color:#6E6E6E;letter-spacing:-0.020px;">MyDesktopApp.Startup</span>
<svg style="left:419px;top:583px;" width="7" height="4" viewBox="0 0 7 4"><path d="M0.3 0 H6.7 L3.5 3.3 Z" fill="#1E1E1E"/></svg>
<svg style="left:808px;top:583px;" width="7" height="4" viewBox="0 0 7 4"><path d="M0.3 0 H6.7 L3.5 3.3 Z" fill="#1E1E1E"/></svg>
<svg style="left:1198px;top:583px;" width="7" height="4" viewBox="0 0 7 4"><path d="M0.3 0 H6.7 L3.5 3.3 Z" fill="#1E1E1E"/></svg>
<div style="left:430px;top:573px;width:3px;height:21px;background:#98A6D2;"></div>
<div style="left:432px;top:573px;width:1px;height:21px;background:#C8D2EE;"></div>
<div style="left:818px;top:573px;width:3px;height:21px;background:#98A6D2;"></div>
<div style="left:820px;top:573px;width:1px;height:21px;background:#C8D2EE;"></div>
<div style="left:43px;top:595px;width:1184px;height:482px;background:#fff;"></div>
<div style="left:43px;top:595px;width:17px;height:482px;background:#E6E7E8;"></div>
<div style="left:1208px;top:595px;width:19px;height:482px;background:#E8E8EC;"></div>
<div style="left:137px;top:595px;width:1071px;height:19px;border:1px solid #E3E3E8;box-sizing:border-box;"></div>
<span class="t" style="left:92.0px;top:595.50px;font-size:14px;line-height:18px;color:#116B68;font-family:'Liberation Mono',monospace;letter-spacing:-0.401px;">1</span>
<span class="t c" style="left:139.0px;top:595.77px"><span style="color:#0000FF">using</span> Microsoft.AspNetCore.Components.Builder;</span>
<span class="t" style="left:92.0px;top:614.50px;font-size:14px;line-height:18px;color:#116B68;font-family:'Liberation Mono',monospace;letter-spacing:-0.401px;">2</span>
<span class="t c" style="left:139.0px;top:614.77px"><span style="color:#0000FF">using</span> Microsoft.Extensions.DependencyInjection;</span>
<span class="t" style="left:92.0px;top:633.50px;font-size:14px;line-height:18px;color:#116B68;font-family:'Liberation Mono',monospace;letter-spacing:-0.401px;">3</span>
<span class="t" style="left:92.0px;top:652.50px;font-size:14px;line-height:18px;color:#116B68;font-family:'Liberation Mono',monospace;letter-spacing:-0.401px;">4</span>
<span class="t c" style="left:139.0px;top:652.77px"><span style="color:#0000FF">namespace</span> MyDesktopApp</span>
<span class="t" style="left:92.0px;top:671.50px;font-size:14px;line-height:18px;color:#116B68;font-family:'Liberation Mono',monospace;letter-spacing:-0.401px;">5</span>
<span class="t c" style="left:139.0px;top:671.77px">{</span>
<span class="t" style="left:171px;top:690.00px;font-size:9.5px;line-height:13px;color:#707070;letter-spacing:0.449px;">1 reference</span>
<span class="t" style="left:92.0px;top:703.50px;font-size:14px;line-height:18px;color:#116B68;font-family:'Liberation Mono',monospace;letter-spacing:-0.401px;">6</span>
<span class="t c" style="left:171.0px;top:703.77px"><span style="color:#0000FF">public</span> <span style="color:#0000FF">class</span> <span style="color:#21807C">Startup</span></span>
<span class="t" style="left:92.0px;top:722.50px;font-size:14px;line-height:18px;color:#116B68;font-family:'Liberation Mono',monospace;letter-spacing:-0.401px;">7</span>
<span class="t c" style="left:171.0px;top:722.77px">{</span>
<span class="t" style="left:203px;top:741.00px;font-size:9.5px;line-height:13px;color:#707070;letter-spacing:0.516px;">0 references</span>
<span class="t" style="left:92.0px;top:754.50px;font-size:14px;line-height:18px;color:#116B68;font-family:'Liberation Mono',monospace;letter-spacing:-0.401px;">8</span>
<span class="t c" style="left:203.0px;top:754.77px"><span style="color:#0000FF">public</span> <span style="color:#0000FF">void</span> ConfigureServices(<span style="color:#21807C">IServiceCollection</span> services)</span>
<span class="t" style="left:92.0px;top:773.50px;font-size:14px;line-height:18px;color:#116B68;font-family:'Liberation Mono',monospace;letter-spacing:-0.401px;">9</span>
<span class="t c" style="left:203.0px;top:773.77px">{</span>
<span class="t" style="left:84.0px;top:792.50px;font-size:14px;line-height:18px;color:#116B68;font-family:'Liberation Mono',monospace;letter-spacing:-0.401px;">10</span>
<span class="t c" style="left:203.0px;top:792.77px">}</span>
<span class="t" style="left:84.0px;top:811.50px;font-size:14px;line-height:18px;color:#116B68;font-family:'Liberation Mono',monospace;letter-spacing:-0.401px;">11</span>
<span class="t" style="left:84.0px;top:843.50px;font-size:14px;line-height:18px;color:#116B68;font-family:'Liberation Mono',monospace;letter-spacing:-0.401px;">12</span>
<span class="t c" style="left:203.0px;top:843.77px"><span style="color:#0000FF">public</span> <span style="color:#0000FF">void</span> Configure(<span style="color:#21807C">IComponentsApplicationBuilder</span> app)</span>
<span class="t" style="left:84.0px;top:862.50px;font-size:14px;line-height:18px;color:#116B68;font-family:'Liberation Mono',monospace;letter-spacing:-0.401px;">13</span>
<span class="t c" style="left:203.0px;top:862.77px">{</span>
<span class="t" style="left:84.0px;top:881.50px;font-size:14px;line-height:18px;color:#116B68;font-family:'Liberation Mono',monospace;letter-spacing:-0.401px;">14</span>
<span class="t c" style="left:235.0px;top:881.77px">app.AddComponent&lt;<span style="color:#21807C">App</span>&gt;(<span style="color:#A31515">&quot;app&quot;</span>);</span>
<span class="t" style="left:84.0px;top:900.50px;font-size:14px;line-height:18px;color:#116B68;font-family:'Liberation Mono',monospace;letter-spacing:-0.401px;">15</span>
<span class="t c" style="left:203.0px;top:900.77px">}</span>
<span class="t" style="left:84.0px;top:919.50px;font-size:14px;line-height:18px;color:#116B68;font-family:'Liberation Mono',monospace;letter-spacing:-0.401px;">16</span>
<span class="t c" style="left:171.0px;top:919.77px">}</span>
<span class="t" style="left:84.0px;top:938.50px;font-size:14px;line-height:18px;color:#116B68;font-family:'Liberation Mono',monospace;letter-spacing:-0.401px;">17</span>
<span class="t c" style="left:139.0px;top:938.77px">}</span>
<span class="t" style="left:84.0px;top:957.50px;font-size:14px;line-height:18px;color:#116B68;font-family:'Liberation Mono',monospace;letter-spacing:-0.401px;">18</span>
<div style="left:596px;top:771px;width:14px;height:0px;border-top:1px dotted #9A9A9A;"></div>
<svg style="left:420px;top:896px;" width="24" height="3" viewBox="0 0 24 3"><path d="M0 2 L1.5 0.5 L3 2 L4.5 0.5 L6 2 L7.5 0.5 L9 2 L10.5 0.5 L12 2 L13.5 0.5 L15 2 L16.5 0.5 L18 2 L19.5 0.5 L21 2 L22.5 0.5 L24 2" fill="none" stroke="#D8C400" stroke-width="0.9"/></svg>
<div style="left:128px;top:600px;width:9px;height:9px;background:#fff;border:1px solid #A5A5A5;box-sizing:border-box;"></div>
<div style="left:130px;top:604px;width:5px;height:1px;background:#555;"></div>
<div style="left:128px;top:657px;width:9px;height:9px;background:#fff;border:1px solid #A5A5A5;box-sizing:border-box;"></div>
<div style="left:130px;top:661px;width:5px;height:1px;background:#555;"></div>
<div style="left:128px;top:708px;width:9px;height:9px;background:#fff;border:1px solid #A5A5A5;box-sizing:border-box;"></div>
<div style="left:130px;top:712px;width:5px;height:1px;background:#555;"></div>
<div style="left:128px;top:759px;width:9px;height:9px;background:#fff;border:1px solid #A5A5A5;box-sizing:border-box;"></div>
<div style="left:130px;top:763px;width:5px;height:1px;background:#555;"></div>
<div style="left:128px;top:848px;width:9px;height:9px;background:#fff;border:1px solid #A5A5A5;box-sizing:border-box;"></div>
<div style="left:130px;top:852px;width:5px;height:1px;background:#555;"></div>
<div style="left:132px;top:608px;width:1px;height:24px;background:#A5A5A5;"></div>
<div style="left:132px;top:631px;width:4px;height:1px;background:#A5A5A5;"></div>
<div style="left:132px;top:665px;width:1px;height:42px;background:#A5A5A5;"></div>
<div style="left:132px;top:716px;width:1px;height:42px;background:#A5A5A5;"></div>
<div style="left:132px;top:767px;width:1px;height:80px;background:#A5A5A5;"></div>
<div style="left:132px;top:856px;width:1px;height:100px;background:#A5A5A5;"></div>
<div style="left:132px;top:809px;width:4px;height:1px;background:#A5A5A5;"></div>
<div style="left:132px;top:917px;width:4px;height:1px;background:#A5A5A5;"></div>
<div style="left:132px;top:936px;width:4px;height:1px;background:#A5A5A5;"></div>
<div style="left:132px;top:955px;width:4px;height:1px;background:#A5A5A5;"></div>
<div style="left:143px;top:689px;width:0px;height:248px;border-left:1px dashed #555;"></div>
<div style="left:175px;top:740px;width:0px;height:178px;border-left:1px dashed #555;"></div>
<div style="left:207px;top:880px;width:0px;height:19px;border-left:1px dashed #555;"></div>
<svg style="left:1213px;top:1065px;" width="9" height="5" viewBox="0 0 9 5"><path d="M0 0 L4.5 5 L9 0 Z" fill="#868999"/></svg>
<div style="left:43px;top:1077px;width:1184px;height:17px;background:#E8E8EC;"></div>
<div style="left:43px;top:1078px;width:59px;height:16px;background:#fff;border:1px solid #C3CCE6;box-sizing:border-box;"></div>
<span class="t" style="left:46px;top:1079.00px;font-size:11.5px;line-height:14px;color:#1E1E1E;letter-spacing:-0.622px;">100 %</span>
<svg style="left:94px;top:1084px;" width="7" height="4" viewBox="0 0 7 4"><path d="M0 0 H7 L3.5 3.8 Z" fill="#1E1E1E"/></svg>
<svg style="left:128px;top:1081px;" width="10" height="10" viewBox="0 0 10 10"><circle cx="5" cy="5" r="4.8" fill="#2E9E3A"/><path d="M2.6 5.2 L4.4 7 L7.6 3.4" fill="none" stroke="#fff" stroke-width="1.4"/></svg>
<span class="t" style="left:143px;top:1079.00px;font-size:11.5px;line-height:14px;color:#1E1E1E;letter-spacing:0.102px;">No issues found</span>
<div style="left:285px;top:1079px;width:1px;height:13px;background:#C8C8D0;"></div>
<svg style="left:300px;top:1079px;" width="13" height="13" viewBox="0 0 13 13"><path d="M11.6 1.4 L9.4 3.6" stroke="#333" stroke-width="1.3" stroke-dasharray="1.2 0.6"/><path d="M5 3 A4.2 4.2 0 0 1 11 8.8 Z" fill="#3A3A3A"/><path d="M4.2 3.8 L10.2 9.6 L6.4 12.2 L0.8 6.8 Z" fill="#F6F6F8" stroke="#555" stroke-width="1"/><path d="M3.6 5 L9 10.4" stroke="#555" stroke-width="0.8" stroke-dasharray="1 0.8"/></svg>
<svg style="left:317px;top:1084px;" width="7" height="4" viewBox="0 0 7 4"><path d="M0 0 H7 L3.5 3.8 Z" fill="#000"/></svg>
<svg style="left:354px;top:1082px;" width="5" height="8" viewBox="0 0 5 8"><path d="M5 0 V8 L0 4 Z" fill="#C6C6CE"/></svg>
<svg style="left:1033px;top:1082px;" width="5" height="8" viewBox="0 0 5 8"><path d="M0 0 V8 L5 4 Z" fill="#C6C6CE"/></svg>
<span class="t" style="left:1066px;top:1079.00px;font-size:11.5px;line-height:14px;color:#1E1E1E;letter-spacing:-0.315px;">Ln: 1</span>
<span class="t" style="left:1108px;top:1079.00px;font-size:11.5px;line-height:14px;color:#1E1E1E;letter-spacing:-0.297px;">Ch: 1</span>
<span class="t" style="left:1153px;top:1080.00px;font-size:11.5px;line-height:14px;color:#1E1E1E;letter-spacing:-1.549px;">SPC</span>
<span class="t" style="left:1192px;top:1080.00px;font-size:11.5px;line-height:14px;color:#1E1E1E;letter-spacing:-1.258px;">CRLF</span>
<div style="left:1235px;top:73px;width:333px;height:21px;background:#40568D;"></div>
<span class="t" style="left:1239px;top:76.00px;font-size:12px;line-height:16px;color:#fff;letter-spacing:-0.081px;">Solution Explorer</span>
<svg style="left:1520px;top:81px;" width="9" height="5" viewBox="0 0 9 5"><path d="M0 0 H9 L4.5 4.6 Z" fill="#8FA0D0"/></svg>
<svg style="left:1536px;top:77px;" width="9" height="13" viewBox="0 0 9 13"><path d="M2.5 0.5 H6.5 V7 H2.5 Z M5.5 0.5 V7 M0.5 7.5 H8.5 M4.5 7.5 V12.5" fill="none" stroke="#C9D2EE" stroke-width="1"/></svg>
<svg style="left:1553px;top:79px;" width="9" height="9" viewBox="0 0 9 9"><path d="M0.5 0.5 L8.5 8.5 M8.5 0.5 L0.5 8.5" stroke="#C9D2EE" stroke-width="1.3"/></svg>
<div style="left:1235px;top:94px;width:333px;height:29px;background:#CCD5F0;"></div>
<svg style="left:1244px;top:102px;" width="12" height="12" viewBox="0 0 12 12"><circle cx="6" cy="6" r="6" fill="#A9B0CE"/><path d="M9.6 6 H3.6 M6 3.2 L3.2 6 L6 8.8" stroke="#D6DDF3" stroke-width="1.7" fill="none"/></svg>
<svg style="left:1266px;top:102px;" width="12" height="12" viewBox="0 0 12 12"><circle cx="6" cy="6" r="6" fill="#A9B0CE"/><path d="M2.4 6 H8.4 M6 3.2 L8.8 6 L6 8.8" stroke="#D6DDF3" stroke-width="1.7" fill="none"/></svg>
<svg style="left:1287px;top:100px;" width="15" height="15" viewBox="0 0 15 15"><path d="M1 8 L7.5 1.5 L14 8 M3 7 V14 H12 V7 M10.5 2 V4.5" fill="none" stroke="#2B2B2B" stroke-width="1.4"/><rect x="6" y="9" width="3.2" height="5" fill="#2B2B2B"/></svg>
<svg style="left:1310px;top:100px;" width="16" height="15" viewBox="0 0 16 15"><path d="M6 1 H10 L11 2.4 H15 V9 H6 Z" fill="#DCB67A"/><rect x="1" y="6.5" width="8" height="6.5" fill="#CCD5F0" stroke="#2B2B2B" stroke-width="1.3"/><rect x="1" y="6.5" width="8" height="1.6" fill="#2B2B2B"/><path d="M2 4 H5 M3.8 2.6 L5.2 4 L3.8 5.4 M14 11.5 H11 M12.2 10.1 L10.8 11.5 L12.2 12.9" fill="none" stroke="#00468C" stroke-width="1.1"/></svg>
<svg style="left:1331px;top:106px;" width="7" height="4" viewBox="0 0 7 4"><path d="M0.3 0 H6.7 L3.5 3.3 Z" fill="#1E1E1E"/></svg>
<div style="left:1343px;top:98px;width:1px;height:20px;background:#8C9AC6;"></div>
<svg style="left:1353px;top:100px;" width="16" height="16" viewBox="0 0 16 16"><path d="M1 1.5 H6 M3.5 1.5 V4.5 M2 2.5 H5" stroke="#2B2B2B" stroke-width="1.2" fill="none"/><circle cx="9" cy="9.8" r="4.6" fill="#DDE2F5" stroke="#2B2B2B" stroke-width="1.2"/><path d="M8.6 7 V10.4 H11" fill="none" stroke="#2B2B2B" stroke-width="1.2"/></svg>
<svg style="left:1374px;top:107px;" width="7" height="4" viewBox="0 0 7 4"><path d="M0.3 0 H6.7 L3.5 3.3 Z" fill="#1E1E1E"/></svg>
<svg style="left:1388px;top:101px;" width="13" height="13" viewBox="0 0 13 13"><path d="M3.5 3 H10.5 V9.5 M5.5 1 H12.5 V7.5" fill="none" stroke="#2B2B2B" stroke-width="1.1"/><rect x="1.5" y="5.5" width="7" height="6" fill="#DDE2F5" stroke="#2B2B2B" stroke-width="1.2"/><rect x="3.4" y="8" width="3.2" height="1.2" fill="#00539C"/></svg>
<svg style="left:1409px;top:101px;" width="14" height="14" viewBox="0 0 14 14"><path d="M6 0.5 H0.5 V9.5 H2.5 M9 2 H11.5 L13.5 4 V11.5 H12" fill="none" stroke="#2B2B2B" stroke-width="1.1"/><path d="M3.5 2.5 H8.5 L11 5 V13.5 H3.5 Z" fill="#DDE2F5" stroke="#2B2B2B" stroke-width="1.1"/><path d="M5 7 H9.4 M5 9 H9.4 M5 11 H8.4" stroke="#2B2B2B" stroke-width="0.9"/></svg>
<div style="left:1430px;top:98px;width:1px;height:20px;background:#8C9AC6;"></div>
<div style="left:1436px;top:97px;width:22px;height:22px;background:#FFEEC8;border:1px solid #E2B565;box-sizing:border-box;"></div>
<svg style="left:1440px;top:101px;" width="15" height="14" viewBox="0 0 15 14"><g fill="#2B2B2B"><rect x="0" y="0" width="3.4" height="3.4"/><rect x="4.6" y="4.4" width="3.4" height="3.4"/><rect x="9" y="8.6" width="5" height="5"/></g><path d="M1.7 3 V6 H5 M6.2 7 V11 H9.5" fill="none" stroke="#2B2B2B" stroke-width="1.1"/></svg>
<svg style="left:1461px;top:106px;" width="7" height="4" viewBox="0 0 7 4"><path d="M0.3 0 H6.7 L3.5 3.3 Z" fill="#1E1E1E"/></svg>
<div style="left:1473px;top:98px;width:1px;height:20px;background:#8C9AC6;"></div>
<svg style="left:1481px;top:100px;" width="16" height="16" viewBox="0 0 16 16"><path d="M3 13.6 L9 7.6" stroke="#2B2B2B" stroke-width="3.4" stroke-linecap="round"/><circle cx="10.6" cy="5.6" r="4.5" fill="#2B2B2B"/><path d="M10 4.6 L13.4 1.2 L15.6 3.4 L12.2 6.8 Z" fill="#CCD5F0"/></svg>
<div style="left:1500px;top:96px;width:22px;height:24px;background:#FFEEC8;border:1px solid #E2B565;box-sizing:border-box;"></div>
<svg style="left:1504px;top:104px;" width="15" height="6" viewBox="0 0 15 6"><rect x="0" y="4" width="6" height="1.2" fill="#2B2B2B"/><rect x="6" y="0.6" width="8.6" height="4.6" fill="#2B2B2B"/></svg>
<div style="left:1525px;top:98px;width:1px;height:20px;background:#8C9AC6;"></div>
<svg style="left:1535px;top:100px;" width="12" height="15" viewBox="0 0 12 15"><path d="M3 3 V0.6 H8.4 L10.8 3 V11 H8.6" fill="none" stroke="#2B2B2B" stroke-width="1.1"/><path d="M0.6 4 H7.6 V14 H0.6 Z" fill="#E8ECF8" stroke="#2B2B2B" stroke-width="1.1"/><path d="M2.2 12 L6.6 7.4" stroke="#D2401F" stroke-width="1.6"/><path d="M4.2 6.8 H7.2 V9.8 Z" fill="#D2401F"/><path d="M1.6 9.6 V12.6 H4.6 Z" fill="#3A9A3A"/></svg>
<div style="left:1235px;top:123px;width:333px;height:19px;background:#fff;border:1px solid #C3CCE6;box-sizing:border-box;"></div>
<span class="t" style="left:1240px;top:125.00px;font-size:12px;line-height:16px;color:#6E6E6E;letter-spacing:-0.154px;">Search Solution Explorer (Ctrl+;)</span>
<svg style="left:1541px;top:125px;" width="14" height="14" viewBox="0 0 14 14"><circle cx="8.5" cy="5.3" r="3.6" fill="none" stroke="#555" stroke-width="1.7"/><path d="M6 7.8 L1.6 12.4" stroke="#555" stroke-width="2.2" stroke-linecap="round"/></svg>
<svg style="left:1557px;top:131px;" width="7" height="4" viewBox="0 0 7 4"><path d="M0.3 0 H6.7 L3.5 3.3 Z" fill="#6E6E6E"/></svg>
<div style="left:1235px;top:142px;width:333px;height:800px;background:#F7F9FE;"></div>
<div style="left:1235px;top:469px;width:333px;height:19px;background:#E6E7F0;"></div>
<svg style="left:1241px;top:152px;" width="6" height="8" viewBox="0 0 6 8"><rect x="0" y="3.4" width="5.4" height="4" fill="#1BA1E2"/><path d="M0.6 2.4 C0.6 0.2 4.8 0.2 4.8 2.4" fill="none" stroke="#1BA1E2" stroke-width="1.1"/><rect x="2" y="4.6" width="1.4" height="1.8" fill="#F7F9FE"/></svg>
<svg style="left:1248px;top:148px;" width="15" height="15" viewBox="0 0 15 15"><path d="M1 0.8 H13.5 V12 H10.5" fill="none" stroke="#2B2B2B" stroke-width="1.2"/><rect x="1" y="0.8" width="12.5" height="2" fill="#2B2B2B"/><path d="M8.2 6 L10 6.8 V13.2 L8.2 14 L4.2 10.8 L2.4 12.2 L1.4 11.7 V8.3 L2.4 7.8 L4.2 9.2 Z M8.2 8.4 L6 10 L8.2 11.6 Z" fill="#8A50C8" fill-rule="evenodd"/></svg>
<span class="t" style="left:1268px;top:147.00px;font-size:12px;line-height:16px;color:#1E1E1E;letter-spacing:-0.096px;">Solution &#x27;BlazorDesktop&#x27; (3 of 3 projects)</span>
<svg style="left:1245px;top:169px;" width="7" height="7" viewBox="0 0 7 7"><path d="M7 0 V7 H0 Z" fill="#1E1E1E"/></svg>
<svg style="left:1266px;top:167px;" width="15" height="12" viewBox="0 0 15 12"><path d="M1.2 6.5 V4.2 L4.6 0.6 H13.4 V10.6 H11" fill="#EEF0FA" stroke="#DCB67A" stroke-width="1.1"/><path d="M0.2 6.4 H9.8 L12.4 10.9 H1.5 Z" fill="#DCB67A"/></svg>
<span class="t" style="left:1286px;top:165.00px;font-size:12px;line-height:16px;color:#1E1E1E;letter-spacing:-0.241px;">samples</span>
<svg style="left:1263px;top:187px;" width="7" height="7" viewBox="0 0 7 7"><path d="M7 0 V7 H0 Z" fill="#1E1E1E"/></svg>
<svg style="left:1277px;top:188px;" width="6" height="8" viewBox="0 0 6 8"><rect x="0" y="3.4" width="5.4" height="4" fill="#1BA1E2"/><path d="M0.6 2.4 C0.6 0.2 4.8 0.2 4.8 2.4" fill="none" stroke="#1BA1E2" stroke-width="1.1"/><rect x="2" y="4.6" width="1.4" height="1.8" fill="#F7F9FE"/></svg>
<div style="left:1284px;top:185px;width:14px;height:12px;background:#fff;border:1px solid #388A34;box-sizing:border-box;"></div>
<span class="t" style="left:1286px;top:186.00px;font-size:9px;line-height:12px;color:#222;letter-spacing:-0.752px;">C#</span>
<span class="t" style="left:1304px;top:183.00px;font-size:12px;line-height:16px;color:#1E1E1E;font-family:'Liberation Sans',sans-serif;font-weight:bold;letter-spacing:-0.112px;">MyDesktopApp</span>
<svg style="left:1282px;top:204px;" width="6" height="10" viewBox="0 0 6 10"><path d="M0.6 0.8 L5.2 5 L0.6 9.2 Z" fill="none" stroke="#1E1E1E" stroke-width="1.1"/></svg>
<svg style="left:1302px;top:204px;" width="15" height="11" viewBox="0 0 15 11"><g fill="#2B2B2B"><rect x="10.5" y="0.3" width="3.6" height="4.2"/><rect x="3" y="1.3" width="2.5" height="2.3"/><rect x="7.4" y="1.9" width="1.6" height="1"/><rect x="0" y="6.3" width="2.5" height="2.4"/><rect x="4" y="7" width="1.8" height="1"/><rect x="7" y="5.3" width="4" height="4.7"/></g></svg>
<span class="t" style="left:1322px;top:201.00px;font-size:12px;line-height:16px;color:#1E1E1E;letter-spacing:-0.227px;">Dependencies</span>
<svg style="left:1281px;top:223px;" width="7" height="7" viewBox="0 0 7 7"><path d="M7 0 V7 H0 Z" fill="#1E1E1E"/></svg>
<svg style="left:1295px;top:224px;" width="6" height="8" viewBox="0 0 6 8"><rect x="0" y="3.4" width="5.4" height="4" fill="#1BA1E2"/><path d="M0.6 2.4 C0.6 0.2 4.8 0.2 4.8 2.4" fill="none" stroke="#1BA1E2" stroke-width="1.1"/><rect x="2" y="4.6" width="1.4" height="1.8" fill="#F7F9FE"/></svg>
<svg style="left:1302px;top:221px;" width="15" height="12" viewBox="0 0 15 12"><path d="M1.2 6.5 V4.2 L4.6 0.6 H13.4 V10.6 H11" fill="#EEF0FA" stroke="#DCB67A" stroke-width="1.1"/><path d="M0.2 6.4 H9.8 L12.4 10.9 H1.5 Z" fill="#DCB67A"/></svg>
<span class="t" style="left:1322px;top:219.00px;font-size:12px;line-height:16px;color:#1E1E1E;letter-spacing:-0.605px;">Pages</span>
<svg style="left:1313px;top:242px;" width="6" height="8" viewBox="0 0 6 8"><rect x="0" y="3.4" width="5.4" height="4" fill="#1BA1E2"/><path d="M0.6 2.4 C0.6 0.2 4.8 0.2 4.8 2.4" fill="none" stroke="#1BA1E2" stroke-width="1.1"/><rect x="2" y="4.6" width="1.4" height="1.8" fill="#F7F9FE"/></svg>
<svg style="left:1322px;top:238px;" width="12" height="14" viewBox="0 0 12 14"><path d="M0.7 0.7 H7.6 L10.8 3.8 V13 H0.7 Z" fill="#fff" stroke="#2B2B2B" stroke-width="1.2"/><path d="M7.4 0.8 V4 H10.6" fill="none" stroke="#2B2B2B" stroke-width="1"/><circle cx="5.6" cy="8.6" r="2" fill="none" stroke="#2E8B2E" stroke-width="1"/><circle cx="5.8" cy="8.8" r="0.7" fill="#2E8B2E"/></svg>
<span class="t" style="left:1340px;top:237.00px;font-size:12px;line-height:16px;color:#1E1E1E;letter-spacing:-0.054px;">Counter.razor</span>
<div style="left:1235px;top:950px;width:333px;height:21px;background:#40568D;"></div>
<svg style="left:1520px;top:958px;" width="9" height="5" viewBox="0 0 9 5"><path d="M0 0 H9 L4.5 4.6 Z" fill="#8FA0D0"/></svg>
<svg style="left:1536px;top:954px;" width="9" height="13" viewBox="0 0 9 13"><path d="M2.5 0.5 H6.5 V7 H2.5 Z M5.5 0.5 V7 M0.5 7.5 H8.5 M4.5 7.5 V12.5" fill="none" stroke="#C9D2EE" stroke-width="1"/></svg>
<svg style="left:1553px;top:956px;" width="9" height="9" viewBox="0 0 9 9"><path d="M0.5 0.5 L8.5 8.5 M8.5 0.5 L0.5 8.5" stroke="#C9D2EE" stroke-width="1.3"/></svg>
<div style="left:1235px;top:971px;width:333px;height:25px;background:#fff;border:1px solid #D0D6EA;box-sizing:border-box;"></div>
<svg style="left:1557px;top:982px;" width="7" height="4" viewBox="0 0 7 4"><path d="M0.3 0 H6.7 L3.5 3.3 Z" fill="#1E1E1E"/></svg>
<div style="left:1235px;top:996px;width:333px;height:25px;background:#CCD5F0;"></div>
<svg style="left:1241px;top:1001px;" width="15" height="15" viewBox="0 0 15 15"><g fill="#2B2B2B" shape-rendering="crispEdges"><rect x="1" y="0" width="5" height="5"/><rect x="1" y="9" width="5" height="5"/><rect x="7" y="0" width="5" height="1"/><rect x="7" y="2" width="5" height="1"/><rect x="7" y="4" width="5" height="1"/><rect x="8" y="6" width="4" height="1"/><rect x="8" y="8" width="4" height="1"/><rect x="7" y="11" width="4" height="1"/><rect x="7" y="13" width="4" height="1"/><rect x="13" y="2" width="1" height="1"/><rect x="13" y="4" width="1" height="1"/><rect x="13" y="6" width="1" height="1"/><rect x="13" y="8" width="1" height="1"/><rect x="12" y="13" width="2" height="1"/></g><g fill="#CCD5F0" shape-rendering="crispEdges"><rect x="2" y="2" width="3" height="1"/><rect x="3" y="1" width="1" height="3"/><rect x="2" y="11" width="3" height="1"/><rect x="3" y="10" width="1" height="3"/></g></svg>
<div style="left:1261px;top:997px;width:23px;height:22px;background:#FFEEC8;border:1px solid #E2B565;box-sizing:border-box;"></div>
<svg style="left:1265px;top:1001px;" width="16" height="15" viewBox="0 0 16 15"><rect x="0" y="0" width="7" height="7" fill="#2B2B2B"/><path d="M1.7 6 L3.5 1.4 L5.3 6 M2.4 4.4 H4.6" fill="none" stroke="#FFEEC8" stroke-width="1.1"/><path d="M1 9.6 H6 L1 14 H6" fill="none" stroke="#2B2B2B" stroke-width="1.7"/><path d="M11.4 3 V11 M8.4 8 L11.4 11.6 L14.4 8" fill="none" stroke="#0039A6" stroke-width="2.2"/></svg>
<div style="left:1287px;top:999px;width:1px;height:20px;background:#8C9AC6;"></div>
<svg style="left:1293px;top:1001px;" width="16" height="16" viewBox="0 0 16 16"><path d="M3 13.6 L9 7.6" stroke="#A0A0A8" stroke-width="3.4" stroke-linecap="round"/><circle cx="10.6" cy="5.6" r="4.5" fill="#A0A0A8"/><path d="M10 4.6 L13.4 1.2 L15.6 3.4 L12.2 6.8 Z" fill="#CCD5F0"/></svg>
<div style="left:1235px;top:1021px;width:333px;height:109px;background:#F7F9FE;"></div>
<div style="left:1235px;top:1067px;width:333px;height:1px;background:#E4E7F0;"></div>
<span class="t" style="left:1295px;top:1060.00px;font-size:20px;line-height:24px;color:#B4B5BA;letter-spacing:-0.115px;">Activate Windows</span>
<span class="t" style="left:1295px;top:1086.00px;font-size:14.5px;line-height:18px;color:#B4B5BA;letter-spacing:0.203px;">Go to Settings to activate Windows.</span>
<div style="left:1594px;top:72px;width:6px;height:68px;background:#40568D;"></div>
<span class="t" style="left:1575px;top:72px;width:16px;height:70px;writing-mode:vertical-rl;font-size:12px;line-height:16px;color:#fff;letter-spacing:0.33px">Notifications</span>
<div style="left:43px;top:1102px;width:1184px;height:8px;background:#40568D;overflow:hidden;"><span class="t" style="left:5px;top:4px;font-size:12px;line-height:15px;color:#fff">Watch 1</span></div>
<div style="left:1196px;top:1108px;width:6px;height:2px;background:#C9D2EE;"></div>
<div style="left:1211px;top:1108px;width:2px;height:2px;background:#C9D2EE;"></div>
<div style="left:1218px;top:1108px;width:2px;height:2px;background:#C9D2EE;"></div>
<div style="left:43px;top:1111px;width:83px;height:18px;background:#40568D;"></div>
<span class="t" style="left:48px;top:1112.00px;font-size:12px;line-height:16px;color:#E6EBFA;letter-spacing:-0.358px;">Parallel Stacks</span>
<div style="left:129px;top:1111px;width:37px;height:18px;background:#40568D;"></div>
<span class="t" style="left:134px;top:1112.00px;font-size:12px;line-height:16px;color:#E6EBFA;letter-spacing:-0.735px;">Tasks</span>
<div style="left:168px;top:1111px;width:53px;height:18px;background:#fff;"></div>
<span class="t" style="left:173px;top:1112.00px;font-size:12px;line-height:16px;color:#1E1E1E;letter-spacing:-0.224px;">Watch 1</span>
<div style="left:224px;top:1111px;width:60px;height:18px;background:#40568D;"></div>
<span class="t" style="left:228px;top:1112.00px;font-size:12px;line-height:16px;color:#E6EBFA;letter-spacing:-0.302px;">Call Stack</span>
<div style="left:286px;top:1111px;width:72px;height:18px;background:#40568D;"></div>
<span class="t" style="left:291px;top:1112.00px;font-size:12px;line-height:16px;color:#E6EBFA;letter-spacing:-0.125px;">Breakpoints</span>
<div style="left:361px;top:1111px;width:149px;height:18px;background:#40568D;"></div>
<span class="t" style="left:365px;top:1112.00px;font-size:12px;line-height:16px;color:#E6EBFA;letter-spacing:-0.207px;">Package Manager Console</span>
<div style="left:512px;top:1111px;width:48px;height:18px;background:#40568D;"></div>
<span class="t" style="left:517px;top:1112.00px;font-size:12px;line-height:16px;color:#E6EBFA;letter-spacing:0.329px;">Output</span>
<div style="left:562px;top:1111px;width:56px;height:18px;background:#40568D;"></div>
<span class="t" style="left:567px;top:1112.00px;font-size:12px;line-height:16px;color:#E6EBFA;letter-spacing:-0.267px;">Error List</span>
<div style="left:0px;top:1137px;width:1600px;height:23px;background:#A34C42;"></div>
<svg style="left:4px;top:1142.5px;" width="16" height="14" viewBox="0 0 16 14"><path d="M3.6 1 H15 L12.4 12.6 H1 Z" fill="none" stroke="#fff" stroke-width="1.2"/></svg>
<span class="t" style="left:28px;top:1141.00px;font-size:12px;line-height:16px;color:#fff;letter-spacing:-0.538px;">Ready</span>
<svg style="left:1024px;top:1141px;" width="16" height="16" viewBox="0 0 16 16"><path d="M8 0.3 C3.6 0.3 0.2 3.8 0.2 8.1 C0.2 11.6 2.4 14.5 5.5 15.5 C5.9 15.6 6 15.3 6 15.1 V13.7 C3.9 14.2 3.4 12.7 3.4 12.7 C3 11.8 2.5 11.6 2.5 11.6 C1.8 11.1 2.6 11.1 2.6 11.1 C3.3 11.2 3.8 11.9 3.8 11.9 C4.5 13.1 5.6 12.7 6.1 12.5 C6.1 12 6.3 11.7 6.6 11.5 C4.8 11.3 3 10.6 3 7.7 C3 6.8 3.3 6.1 3.8 5.6 C3.7 5.4 3.5 4.6 3.9 3.5 C3.9 3.5 4.6 3.3 6 4.3 C6.6 4.1 7.3 4 8 4 C8.7 4 9.4 4.1 10 4.3 C11.4 3.3 12.1 3.5 12.1 3.5 C12.5 4.6 12.3 5.4 12.2 5.6 C12.7 6.1 13 6.8 13 7.7 C13 10.6 11.2 11.3 9.4 11.5 C9.7 11.8 10 12.3 10 13 V15.1 C10 15.3 10.1 15.6 10.5 15.5 C13.6 14.5 15.8 11.6 15.8 8.1 C15.8 3.8 12.4 0.3 8 0.3 Z" fill="#fff"/></svg>
<span class="t" style="left:1044px;top:1141.00px;font-size:12px;line-height:16px;color:#fff;letter-spacing:-0.305px;">SteveSandersonMS / BlazorDesktop</span>
<svg style="left:1247px;top:1143px;" width="9" height="12" viewBox="0 0 9 12"><path d="M4.5 11.5 V1.5 M0.8 5.2 L4.5 1.2 L8.2 5.2" fill="none" stroke="#fff" stroke-width="1.7"/></svg>
<span class="t" style="left:1266px;top:1141.00px;font-size:12px;line-height:16px;color:#fff;">0</span>
<svg style="left:1297px;top:1142px;" width="12" height="12" viewBox="0 0 12 12"><path d="M0.6 11.4 L1.4 8 L8.4 1 L11 3.6 L4 10.6 Z" fill="#E8D3CF"/></svg>
<span class="t" style="left:1316px;top:1141.00px;font-size:12px;line-height:16px;color:#fff;">0</span>
<svg style="left:1345px;top:1141px;" width="15" height="15" viewBox="0 0 15 15"><path d="M7.5 0.5 L14.5 7.5 L7.5 14.5 L0.5 7.5 Z" fill="#F0DCD8"/><path d="M6 4.4 V10.6 M6 6 C8.6 6 9.4 7 9.4 8.6" fill="none" stroke="#A34C42" stroke-width="1.1"/><circle cx="6" cy="4.4" r="1.1" fill="#A34C42"/><circle cx="6" cy="10.6" r="1.1" fill="#A34C42"/><circle cx="9.4" cy="8.8" r="1.1" fill="#A34C42"/></svg>
<span class="t" style="left:1366px;top:1141.00px;font-size:12px;line-height:16px;color:#fff;letter-spacing:-0.310px;">BlazorDesktop</span>
<svg style="left:1464px;top:1141px;" width="15" height="15" viewBox="0 0 15 15"><path d="M0.5 1.2 H3 L7.5 7 L12 1.2 H14.5 M7.5 7 V14.5" fill="none" stroke="#fff" stroke-width="1.3"/></svg>
<span class="t" style="left:1485px;top:1141.00px;font-size:12px;line-height:16px;color:#fff;letter-spacing:-0.279px;">master</span>
<svg style="left:1526px;top:1146px;" width="8" height="5" viewBox="0 0 8 5"><path d="M0 5 H8 L4 0.4 Z" fill="#fff"/></svg>
<svg style="left:1562px;top:1139px;" width="14" height="16" viewBox="0 0 14 16"><path d="M7 1 C10 1 11.4 3.4 11.4 6 C11.4 9 12.6 10.4 13.4 11.4 H0.6 C1.4 10.4 2.6 9 2.6 6 C2.6 3.4 4 1 7 1 Z M5.4 12.6 H8.6 C8.6 14.8 5.4 14.8 5.4 12.6 Z" fill="#E3C7C3"/></svg>
<div style="left:1571px;top:1145px;width:12px;height:12px;background:#fff;border-radius:50%;"></div>
<span class="t" style="left:1574px;top:1145.00px;font-size:10px;line-height:13px;color:#1E1E1E;font-family:'Liberation Sans',sans-serif;font-weight:bold;">3</span>
<div style="left:0px;top:1160px;width:1600px;height:40px;background:#312D28;"></div>
<svg style="left:16.0px;top:1171.5px;" width="16" height="17" viewBox="0 0 16 17"><g fill="#fff"><path d="M0 2.6 L6.6 1.7 V8 H0 Z M7.6 1.5 L16 0.3 V8 H7.6 Z M0 9 H6.6 V15.3 L0 14.4 Z M7.6 9 H16 V16.7 L7.6 15.5 Z"/></g></svg>
<svg style="left:62.5px;top:1172.0px;" width="17" height="16" viewBox="0 0 17 16"><g fill="none" stroke="#fff" stroke-width="1.3"><rect x="2.6" y="3.6" width="9" height="8.4"/><path d="M0.6 1.2 H1.6 M0.6 14.4 H1.6 M1 0.8 H11 M1 14.8 H11"/><path d="M14.4 1 V4.6 M14.4 7 V15"/></g><rect x="13.4" y="4.8" width="2.2" height="2" fill="#fff"/></svg>
<svg style="left:108.5px;top:1169.5px;" width="23" height="21" viewBox="0 0 23 21"><path d="M1 3 H8 L10 5 H21 V19 H1 Z" fill="#E8B84B"/><path d="M1 7 H22 V19.5 H1 Z" fill="#FFD970"/><path d="M6 19.5 V14 H16 V19.5 H13.4 V16.6 H8.6 V19.5 Z" fill="#3F9FE0"/></svg>
<svg style="left:151.0px;top:1168.0px;" width="24" height="24" viewBox="0 0 24 24"><circle cx="12" cy="13" r="10.4" fill="#FF9A1F"/><path d="M4 5 C6 4 7 6 9 5.4 C11 1.4 15 0.4 15 0.4 C14.4 3 17 4.4 19.6 7.2 C23.6 12 21 21 13 23 C6 24 1 18.4 2 11.6 C2.4 9 3 7 4 5 Z" fill="#FF6A2A"/><path d="M3 9 C1.4 14 4 21.4 11 22.8 C17 23.6 21.6 19 21.8 14 C20 19 15 20.6 11 19 C6 17 4 13 3 9 Z" fill="#E8265E"/><circle cx="12.6" cy="12.4" r="5.2" fill="#7A3CC4"/><path d="M7.6 10 C9 8 12 8.4 13 9.4 C11 9.4 10.4 11 11.4 12 C10 13.6 7 12.6 7.6 10 Z" fill="#FFB43A"/></svg>
<svg style="left:194.0px;top:1168.0px;" width="24" height="24" viewBox="0 0 24 24"><path d="M6 4 C10 2 13 5 17 3 L21 3 L20 20 C16 22 12 19 8 21 L3 21 Z" fill="#3B6FC9"/><path d="M12 4 C14 4.6 16 4 20.6 2.6 L20 12 L12 12 Z" fill="#6CB33F"/><path d="M12 12 H20 L19.4 20 C16 21 14 20 12 20 Z" fill="#F3C11B"/><path d="M4 12 H12 V20 C9 19.4 7 20.6 3.4 21 Z" fill="#D9432F"/><circle cx="9" cy="10" r="5.2" fill="#CFE6F8" stroke="#8AA6C8" stroke-width="1.6"/><path d="M5 14 L1 19" stroke="#6E6E72" stroke-width="2.6"/></svg>
<svg style="left:237.5px;top:1168.0px;" width="23" height="24" viewBox="0 0 23 24"><path d="M0.5 0.5 H19 L22.5 4 V23 H0.5 Z" fill="#1414D8" stroke="#8A8A8A" stroke-width="1"/><rect x="6.4" y="0.8" width="9" height="6.6" fill="#C8C8C8"/><rect x="11.4" y="1.6" width="2.6" height="5" fill="#1414D8"/><rect x="3.4" y="10" width="16.4" height="12.6" fill="#E0202A"/><g fill="#fff"><rect x="4.4" y="11.6" width="14.4" height="1.6"/><rect x="4.4" y="14.8" width="14.4" height="1.6"/><rect x="4.4" y="18" width="14.4" height="1.6"/></g></svg>
<svg style="left:280.5px;top:1169.5px;" width="23" height="21" viewBox="0 0 23 21"><path d="M1 3 H8 L10 5 H21 V19 H1 Z" fill="#E8B84B"/><path d="M1 7 H22 V19.5 H1 Z" fill="#FFD970"/><path d="M6 19.5 V14 H16 V19.5 H13.4 V16.6 H8.6 V19.5 Z" fill="#3F9FE0"/></svg>
<div style="left:324px;top:1169px;width:21px;height:21px;background:#0A1A5E;border:1.5px solid #8FB4F0;box-sizing:border-box;"></div>
<span class="t" style="left:327px;top:1172.00px;font-size:13px;line-height:17px;color:#8FC2FF;font-family:'Liberation Sans',sans-serif;font-weight:bold;">Ps</span>
<svg style="left:367.0px;top:1168.0px;" width="24" height="24" viewBox="0 0 24 24"><path d="M1 12 L11 4 L13 6 L9 9 H15 C19.4 9 23 12 23 16 C23 20 19.4 22.6 15 22.6 C10.6 22.6 7.6 19.6 7.6 16.6 L2 16.6 L5.4 14 H1 Z" fill="#F5821F"/><circle cx="15.4" cy="15.6" r="4.6" fill="#fff"/><circle cx="15.6" cy="15.6" r="2.8" fill="#1B4E8F"/></svg>
<svg style="left:409.0px;top:1168.0px;" width="24" height="24" viewBox="0 0 24 24"><path d="M3 14 C3 1 21 1 21 14" fill="none" stroke="#1A22D8" stroke-width="3"/><rect x="0.6" y="11" width="5" height="10" rx="2" fill="#1A22D8"/><rect x="18.4" y="11" width="5" height="10" rx="2" fill="#1A22D8"/><ellipse cx="12" cy="15" rx="6.4" ry="5.4" fill="#F0501A"/><path d="M6.4 15 L8 12 L9.4 17 L11 11 L12.6 18 L14 12 L15.6 16 L17.4 14" fill="none" stroke="#FFC020" stroke-width="1.3"/></svg>
<svg style="left:451.0px;top:1168.0px;" width="24" height="24" viewBox="0 0 24 24"><path d="M1.6 1 H15 L19 5 V23 H1.6 Z" fill="#F2F2F2" stroke="#9A9A9A" stroke-width="1"/><rect x="2.6" y="6" width="15.4" height="16" fill="#7AD84A"/><rect x="2.6" y="16" width="15.4" height="6" fill="#4FB12A"/><path d="M5 9 V17 M7 12 H10 M12 12 H14" stroke="#2A4A1A" stroke-width="1.2"/><path d="M20.6 1 L22.6 2.6 L13 17 L10.6 18 L11 15.4 Z" fill="#F0A030" stroke="#8A5A1A" stroke-width="0.6"/></svg>
<svg style="left:494.0px;top:1170.0px;" width="24" height="20" viewBox="0 0 24 20"><rect x="0.6" y="1" width="22.8" height="18" fill="#0A0A0A" stroke="#8A8A8A" stroke-width="1.2"/><rect x="0.6" y="1" width="22.8" height="2.6" fill="#B8B8B8"/><path d="M3.4 7 H6 M3.4 9.4 H6 M7.4 6 L8.6 10 M9.6 8 H10 M12 10 H19" stroke="#E8E8E8" stroke-width="1.1"/></svg>
<svg style="left:537.0px;top:1169.0px;" width="24" height="22" viewBox="0 0 24 22"><path d="M1.4 14 C5 7 19 7 22.6 14 C19 20 5 20 1.4 14 Z" fill="none" stroke="#F2A51A" stroke-width="2.2"/><circle cx="12" cy="14" r="3.6" fill="none" stroke="#D0401F" stroke-width="1.4"/><circle cx="12" cy="14" r="1.3" fill="#D0401F"/><g fill="#F2A51A"><circle cx="4" cy="6" r="1.5"/><circle cx="8.6" cy="3.4" r="1.5"/><circle cx="14" cy="3" r="1.5"/><circle cx="19.4" cy="5.4" r="1.5"/></g><path d="M19 18 L22.6 16.4" stroke="#F2A51A" stroke-width="1.6"/></svg>
<svg style="left:580.0px;top:1168.0px;" width="24" height="24" viewBox="0 0 24 24"><rect x="2" y="1" width="6.4" height="8.4" rx="1.6" fill="#F2C230"/><rect x="11" y="1" width="8" height="1" fill="none" stroke="#6BC043" stroke-width="1.2" stroke-dasharray="2 1.6"/><path d="M19.4 2 V12 M2 13 V19 H8" fill="none" stroke="#6BC043" stroke-width="1.3" stroke-dasharray="2 1.6"/><path d="M9 10 L21 22" stroke="#C8CCD2" stroke-width="2.6"/><path d="M20 9.4 L10 21.6" stroke="#E0A030" stroke-width="2.4"/><path d="M7.6 9 L11.6 8 L12.6 11 L9 12.4 Z" fill="#D8DCE2"/><path d="M19.6 19.6 L23 23" stroke="#3F6FB5" stroke-width="2.8"/></svg>
<svg style="left:624.0px;top:1172.0px;" width="24" height="16" viewBox="0 0 24 16"><path d="M12 8 C9 3 2 4 2 8 C2 12 9 13 12 8 C15 3 22 4 22 8 C22 12 15 13 12 8 Z" fill="none" stroke="#3F8FE0" stroke-width="3.2"/><path d="M12 8 C15 3 22 4 22 8 C22 12 15 13 12 8" fill="none" stroke="#7B4FC4" stroke-width="3.2"/></svg>
<svg style="left:666.0px;top:1168.5px;" width="24" height="23" viewBox="0 0 24 23"><rect x="8" y="1" width="14" height="13" rx="3" fill="#F2B01E" stroke="#78B82A" stroke-width="2.6"/><rect x="2" y="9" width="14" height="13" rx="3" fill="#F2B01E" stroke="#78B82A" stroke-width="2.6"/></svg>
<div style="left:705px;top:1160px;width:12px;height:40px;background:#46803F;"></div>
<div style="left:717px;top:1160px;width:22px;height:40px;background:#46443F;"></div>
<div style="left:705px;top:1198px;width:34px;height:2px;background:#4FE04A;"></div>
<svg style="left:710.0px;top:1167.5px;" width="24" height="25" viewBox="0 0 24 25"><rect x="1" y="5" width="17" height="17" fill="#F4F4F4" stroke="#7A7A7A" stroke-width="1"/><path d="M1 5 L3 1.4 L20 1.4 L18 5 Z" fill="#2A2A2A"/><g fill="#E8E8E8"><rect x="5" y="2.2" width="2.4" height="2"/><rect x="10" y="2.2" width="2.4" height="2"/><rect x="15" y="2.2" width="2.4" height="2"/></g><path d="M4 9 H8 L6 12.4 C9 12.4 9 17.6 4 17" fill="none" stroke="#D2501F" stroke-width="1.8"/><path d="M12 17 V9 L9.6 13 H14" fill="none" stroke="#2E8B2E" stroke-width="1.6"/><path d="M10 12 L23 18.4 L10 24.6 Z" fill="#C8DCFA" stroke="#7A9ADA" stroke-width="0.8"/></svg>
<svg style="left:753.0px;top:1168.0px;" width="24" height="24" viewBox="0 0 24 24"><circle cx="12" cy="12" r="11" fill="#2E86D0"/><path d="M3 12 C6 8 9 9 11.4 12 C14 8 18 7.6 21.6 9.6 C18 9.6 15.6 11 13 15.4 L11 15 C9.4 12.4 6.6 11.4 3 12 Z" fill="#fff"/></svg>
<svg style="left:796.0px;top:1168.0px;" width="24" height="24" viewBox="0 0 24 24"><ellipse cx="12" cy="12" rx="10.6" ry="11.4" fill="#E8192C"/><ellipse cx="12" cy="12" rx="4.6" ry="8.2" fill="#2D2B28"/></svg>
<svg style="left:839.0px;top:1168.0px;" width="24" height="24" viewBox="0 0 24 24"><path d="M17 1 L23 3.6 V20.4 L17 23 L7.4 14.4 L3 17.8 L1 16.6 V7.4 L3 6.2 L7.4 9.6 Z M17 7.4 L11 12 L17 16.6 Z M3.4 9.8 V14.2 L5.8 12 Z" fill="#9A5FD8" fill-rule="evenodd"/></svg>
<svg style="left:881.0px;top:1168.0px;" width="24" height="24" viewBox="0 0 24 24"><circle cx="8.6" cy="8.6" r="7.6" fill="#3F8FD8"/><path d="M3 6 C6 3 9 6 8 9 C7 12 4 12 3 6 Z M10 3 C13 4 14 7 12 8 Z" fill="#5FB83F"/><rect x="11" y="8" width="10" height="15" fill="#C8CCD2" stroke="#6A6E74" stroke-width="1"/><path d="M12.6 11 H19.4 M12.6 13.6 H19.4 M12.6 16.2 H19.4" stroke="#5A5E64" stroke-width="1"/><path d="M1 2 L6 1 L5 5" fill="#F2C230"/><circle cx="16" cy="21" r="0.9" fill="#5FD83F"/></svg>
<div style="left:925px;top:1169px;width:23px;height:22px;background:#0A0A0A;border:1px solid #5A5A5A;border-radius:3px;box-sizing:border-box;"></div>
<span class="t" style="left:927px;top:1173.50px;font-size:13px;line-height:17px;color:#2A6FE8;font-family:'Liberation Sans',sans-serif;font-weight:bold;">m</span>
<span class="t" style="left:937px;top:1172.50px;font-size:14px;line-height:18px;color:#E8E8E8;font-family:'Liberation Sans',sans-serif;font-weight:bold;">R</span>
<svg style="left:967.0px;top:1168.0px;" width="24" height="24" viewBox="0 0 24 24"><circle cx="12" cy="12" r="11.6" fill="#050505"/><path d="M5 11 L18 5 L15 19 Z" fill="none" stroke="#4FA8E8" stroke-width="2"/><circle cx="5" cy="11" r="3" fill="#6FC0F2"/><circle cx="18" cy="5" r="3" fill="#6FC0F2"/><circle cx="15" cy="19" r="3" fill="#6FC0F2"/></svg>
<svg style="left:1009.5px;top:1168.5px;" width="23" height="23" viewBox="0 0 23 23"><path d="M7 2 L21 3.6 L19 21 L3 22 Z" fill="#E8B84B"/><path d="M6 1 L19.6 2.6 L17 20.6 L1.6 19 Z" fill="#BFE4E8"/><path d="M6 1 L19.6 2.6 L19 6 L5.4 4.6 Z" fill="#8FC8D0"/><path d="M6 1 L12 1.8 L8 19.6 L1.6 19 Z" fill="#98D0D8"/></svg>
<svg style="left:1051.0px;top:1168.0px;" width="24" height="24" viewBox="0 0 24 24"><g fill="none" stroke="#F4F4F4" stroke-width="3"><ellipse cx="12" cy="12" rx="10" ry="4.6"/><ellipse cx="12" cy="12" rx="10" ry="4.6" transform="rotate(60 12 12)"/><ellipse cx="12" cy="12" rx="10" ry="4.6" transform="rotate(120 12 12)"/></g></svg>
<svg style="left:1092.0px;top:1170.0px;" width="24" height="20" viewBox="0 0 24 20"><path d="M4 3 H20 L23 17 H1 Z" fill="#D8DCE0" stroke="#8A8E94" stroke-width="1"/><path d="M6 5 H12 V14 H4 Z" fill="#F4F4F4"/><path d="M13 5 H18.4 L20 14 H13 Z" fill="#3F8F4F"/></svg>
<span class="t" style="left:1098px;top:1175.00px;font-size:10px;line-height:13px;color:#2A4FD8;font-family:'Liberation Sans',sans-serif;font-weight:bold;">λ</span>
<span class="t" style="left:1108px;top:1175.00px;font-size:10px;line-height:13px;color:#E8F8E8;font-family:'Liberation Sans',sans-serif;font-weight:bold;">?</span>
<svg style="left:1135.0px;top:1168.0px;" width="24" height="24" viewBox="0 0 24 24"><path d="M17 1 L23 3.6 V20.4 L17 23 L7.4 14.4 L3 17.8 L1 16.6 V7.4 L3 6.2 L7.4 9.6 Z M17 7.4 L11 12 L17 16.6 Z M3.4 9.8 V14.2 L5.8 12 Z" fill="#9A5FD8" fill-rule="evenodd"/></svg>
<svg style="left:1177.0px;top:1168.0px;" width="24" height="24" viewBox="0 0 24 24"><path d="M12 0.6 L23.4 12 L12 23.4 L0.6 12 Z" fill="#E8E8E8"/><path d="M12 1.4 L17 6.4 L12 11.4 L7 6.4 Z" fill="#E05A4A"/><path d="M6.4 7 L11.4 12 L6.4 17 L1.4 12 Z" fill="#4F9AE8"/><path d="M17.6 7 L22.6 12 L17.6 17 L12.6 12 Z" fill="#5FB85F"/><path d="M12 12.6 L17 17.6 L12 22.6 L7 17.6 Z" fill="#F2D050"/><path d="M12 4 V20 M12 12 L17.6 12" stroke="#2A2A2A" stroke-width="1.4"/><circle cx="12" cy="6" r="1.6" fill="#2A2A2A"/><circle cx="12" cy="18" r="1.6" fill="#2A2A2A"/></svg>
<div style="left:1211px;top:1160px;width:41px;height:40px;background:#4B4946;"></div>
<div style="left:1211px;top:1198px;width:41px;height:2px;background:#76B9ED;"></div>
<svg style="left:1221.0px;top:1170.0px;" width="22" height="20" viewBox="0 0 22 20"><rect x="8" y="1" width="12" height="11" fill="#5A5A5A" stroke="#D8D8D8" stroke-width="1.4"/><rect x="1" y="6" width="9" height="9" fill="#4B4946" stroke="#D8D8D8" stroke-width="1.4"/><rect x="9" y="12" width="9" height="6" fill="#4B4946" stroke="#D8D8D8" stroke-width="1.4"/></svg>
<div style="left:146px;top:1198px;width:34px;height:2px;background:#76B9ED;"></div>
<div style="left:189px;top:1198px;width:34px;height:2px;background:#76B9ED;"></div>
<div style="left:275px;top:1198px;width:34px;height:2px;background:#76B9ED;"></div>
<div style="left:447px;top:1198px;width:34px;height:2px;background:#76B9ED;"></div>
<div style="left:533px;top:1198px;width:34px;height:2px;background:#76B9ED;"></div>
<div style="left:1131px;top:1198px;width:34px;height:2px;background:#76B9ED;"></div>
<div style="left:1173px;top:1198px;width:34px;height:2px;background:#76B9ED;"></div>
<div style="left:302px;top:1198px;width:7px;height:2px;background:#5A8FC0;"></div>
<div style="left:1200px;top:1198px;width:7px;height:2px;background:#5A8FC0;"></div>
<svg style="left:1261px;top:1174px;" width="13" height="8" viewBox="0 0 13 8"><path d="M0.8 7.2 L6.5 1.2 L12.2 7.2" fill="none" stroke="#fff" stroke-width="1.4"/></svg>
<div style="left:1283px;top:1172px;width:16px;height:16px;background:#1414D8;"></div>
<div style="left:1283px;top:1172px;width:5px;height:16px;background:#E81C1C;"></div>
<div style="left:1283px;top:1184px;width:16px;height:4px;background:#0A0A0A;"></div>
<span class="t" style="left:1286px;top:1171.00px;font-size:15px;line-height:19px;color:#F2D020;font-family:'Liberation Sans',sans-serif;font-weight:bold;">?</span>
<svg style="left:1307px;top:1172px;" width="17" height="17" viewBox="0 0 17 17"><circle cx="7.6" cy="7.6" r="6.8" fill="none" stroke="#fff" stroke-width="1.1"/><ellipse cx="7.6" cy="7.6" rx="3" ry="6.8" fill="none" stroke="#fff" stroke-width="1"/><path d="M0.8 7.6 H14.4 M2 4 H13.2 M2 11.2 H9" stroke="#fff" stroke-width="1"/><circle cx="12.6" cy="12.6" r="3.4" fill="#2D2B28" stroke="#fff" stroke-width="1.1"/><path d="M10.4 10.4 L14.8 14.8" stroke="#fff" stroke-width="1.1"/></svg>
<svg style="left:1333px;top:1171px;" width="14" height="19" viewBox="0 0 14 19"><rect x="3" y="0.6" width="6" height="4.6" fill="none" stroke="#fff" stroke-width="1.1"/><rect x="1" y="5.2" width="10" height="12" rx="1.4" fill="none" stroke="#fff" stroke-width="1.1"/><path d="M8 15.6 L10 17.6 L13.4 13.6" fill="none" stroke="#fff" stroke-width="1.1"/></svg>
<svg style="left:1356px;top:1171px;" width="13" height="18" viewBox="0 0 13 18"><path d="M1 1 H12 V11 C12 19 1 19 1 11 Z" fill="#E4E4E4"/><path d="M6.5 1 V8 M1 8 H12" stroke="#8A8A8A" stroke-width="0.9"/><path d="M4.4 11 L8.6 15 M8.6 11 L4.4 15" stroke="#8A8A8A" stroke-width="1"/></svg>
<svg style="left:1378px;top:1172px;" width="17" height="16" viewBox="0 0 17 16"><path d="M1 5.6 H4 L8 1.6 V14.4 L4 10.4 H1 Z" fill="none" stroke="#fff" stroke-width="1.1"/><path d="M10.4 5.4 C11.6 6.8 11.6 9.2 10.4 10.6" fill="none" stroke="#fff" stroke-width="1.1"/><path d="M12.6 3.6 C14.8 6 14.8 10 12.6 12.4" fill="none" stroke="#9A9A9A" stroke-width="1.1"/><path d="M14.8 1.8 C18 5.4 18 10.6 14.8 14.2" fill="none" stroke="#6A6A6A" stroke-width="1.1"/></svg>
<div style="left:1402px;top:1172px;width:17px;height:16px;background:#F4F4F4;border:1px solid #A8A8A8;box-sizing:border-box;"></div>
<svg style="left:1403px;top:1183px;" width="15" height="5" viewBox="0 0 15 5"><path d="M0 5 V3.4 L4 3 L6 1.6 L8 3 L10 2 L12 3.4 L15 3.4 V5 Z" fill="#2EA83A"/></svg>
<svg style="left:1427px;top:1171px;" width="18" height="18" viewBox="0 0 18 18"><path d="M9 1.4 L16.6 9 L9 16.6 L1.4 9 Z" fill="none" stroke="#6A6A6A" stroke-width="1.3"/><path d="M10.6 2.8 L16.8 9 L10.6 15.2 L4.4 9 Z" fill="#E81C24"/></svg>
<span class="t" style="left:1453px;top:1172.00px;font-size:12px;line-height:16px;color:#fff;letter-spacing:-1.001px;">ENG</span>
<span class="t" style="left:1493px;top:1163.00px;font-size:12px;line-height:16px;color:#fff;letter-spacing:-0.241px;">9:47 PM</span>
<span class="t" style="left:1491px;top:1181.00px;font-size:12px;line-height:16px;color:#fff;letter-spacing:0.036px;">8/9/2020</span>
<svg style="left:1558px;top:1169px;" width="26" height="26" viewBox="0 0 26 26"><path d="M1 1 H17 V13 H8 L4.4 16.6 V13 H1 Z" fill="#fff"/><path d="M4 4.6 H14 M4 7.2 H14 M4 9.8 H11" stroke="#2D2B28" stroke-width="1"/><circle cx="16" cy="16" r="7" fill="#2D2B28" stroke="#fff" stroke-width="1"/></svg>
<span class="t" style="left:1570.5px;top:1179.00px;font-size:11.5px;line-height:14px;color:#fff;font-family:'Liberation Sans',sans-serif;font-weight:bold;">2</span>
<div style="left:1595px;top:1160px;width:1px;height:40px;background:#6A6866;"></div>
<div style="left:744px;top:255px;width:702px;height:740px;background:#fff;border:1px solid #5A5A5A;box-sizing:border-box;"></div>
<svg style="left:755px;top:264px;" width="13" height="12" viewBox="0 0 13 12"><g fill="#3A3A3A"><rect x="5" y="0" width="8" height="6.6"/><rect x="0" y="4" width="4" height="5.6"/><rect x="5" y="7.8" width="5.4" height="3.4"/></g></svg>
<span class="t" style="left:774px;top:263.00px;font-size:12px;line-height:16px;color:#000;letter-spacing:0.053px;">MyDesktopApp</span>
<div style="left:1326px;top:270px;width:10px;height:1px;background:#000;"></div>
<div style="left:1371px;top:265px;width:10px;height:10px;border:1px solid #000;box-sizing:border-box;"></div>
<svg style="left:1417px;top:265px;" width="10" height="10" viewBox="0 0 10 10"><path d="M0 0 L10 10 M10 0 L0 10" stroke="#000" stroke-width="1"/></svg>
<div style="left:745px;top:286px;width:700px;height:248px;background-image:linear-gradient(180deg,rgb(5,39,103) 0%,#3a0647 70%);"></div>
<div style="left:745px;top:286px;width:700px;height:56px;background:rgba(0,0,0,0.4);"></div>
<span class="t" style="left:769px;top:303.00px;font-size:17.6px;line-height:22px;color:#fff;letter-spacing:-0.029px;">MyDesktopApp</span>
<div style="left:1373px;top:294px;width:56px;height:40px;background:rgba(255,255,255,0.1);border:1px solid rgba(255,255,255,0.1);border-radius:4px;box-sizing:border-box;"></div>
<div style="left:1372px;top:293px;width:58px;height:42px;border:1px dotted #D8D8E0;box-sizing:border-box;"></div>
<div style="left:1389px;top:305px;width:24px;height:2px;background:rgba(255,255,255,0.5);"></div>
<div style="left:1389px;top:313px;width:24px;height:2px;background:rgba(255,255,255,0.5);"></div>
<div style="left:1389px;top:321px;width:24px;height:2px;background:rgba(255,255,255,0.5);"></div>
<svg style="left:1384px;top:304px;" width="13" height="20" viewBox="0 0 13 20"><path d="M0.6 0.8 V16.4 L4.2 13 L6.8 19 L9.2 18 L6.6 12.2 H11.6 Z" fill="#fff" stroke="#000" stroke-width="1"/></svg>
<svg style="left:777px;top:372px;" width="18" height="17" viewBox="0 0 18 17"><path d="M9 0 L18 8.6 H15.4 V16.6 H10.8 V11 H7.2 V16.6 H2.6 V8.6 H0 Z" fill="#E4E4E4"/></svg>
<span class="t" style="left:809px;top:373.00px;font-size:14.4px;line-height:18px;color:#D7D7D7;letter-spacing:-0.103px;">Home</span>
<svg style="left:777px;top:427px;" width="18" height="18" viewBox="0 0 18 18"><path d="M6.8 0 H11.2 V6.8 H18 V11.2 H11.2 V18 H6.8 V11.2 H0 V6.8 H6.8 Z" fill="#E4E4E4"/></svg>
<span class="t" style="left:809px;top:429.00px;font-size:14.4px;line-height:18px;color:#D7D7D7;letter-spacing:-0.033px;">Counter</span>
<svg style="left:777px;top:485px;" width="18" height="17" viewBox="0 0 18 17"><g fill="#E4E4E4"><rect x="0" y="0" width="7" height="7"/><rect x="0" y="9.4" width="7" height="7"/><rect x="9.4" y="0" width="8.6" height="2.4"/><rect x="9.4" y="4.6" width="7" height="2.4"/><rect x="9.4" y="9.4" width="8.6" height="2.4"/><rect x="9.4" y="14" width="7" height="2.4"/></g></svg>
<span class="t" style="left:809px;top:485.00px;font-size:14.4px;line-height:18px;color:#D7D7D7;letter-spacing:-0.004px;">Fetch data</span>
<span class="t" style="left:769px;top:552.00px;font-size:40px;line-height:46px;color:#212529;letter-spacing:0.009px;">Weather forecast</span>
<span class="t" style="left:769px;top:610.00px;font-size:16px;line-height:19px;color:#212529;letter-spacing:-0.015px;">This component demonstrates fetching data from the server.</span>
<div style="left:769px;top:648px;width:652px;height:1px;background:#DEE2E6;"></div>
<div style="left:769px;top:697px;width:652px;height:2px;background:#DEE2E6;"></div>
<div style="left:769px;top:747px;width:652px;height:1px;background:#DEE2E6;"></div>
<div style="left:769px;top:796px;width:652px;height:1px;background:#DEE2E6;"></div>
<div style="left:769px;top:845px;width:652px;height:1px;background:#DEE2E6;"></div>
<div style="left:769px;top:894px;width:652px;height:1px;background:#DEE2E6;"></div>
<span class="t" style="left:781px;top:663.00px;font-size:16px;line-height:19px;color:#212529;font-family:'Liberation Sans',sans-serif;font-weight:bold;letter-spacing:-0.170px;">Date</span>
<span class="t" style="left:944px;top:663.00px;font-size:16px;line-height:19px;color:#212529;font-family:'Liberation Sans',sans-serif;font-weight:bold;letter-spacing:-0.176px;">Temp. (C)</span>
<span class="t" style="left:1108px;top:663.00px;font-size:16px;line-height:19px;color:#212529;font-family:'Liberation Sans',sans-serif;font-weight:bold;letter-spacing:-0.201px;">Temp. (F)</span>
<span class="t" style="left:1269px;top:663.00px;font-size:16px;line-height:19px;color:#212529;font-family:'Liberation Sans',sans-serif;font-weight:bold;letter-spacing:-0.132px;">Summary</span>
<span class="t" style="left:781px;top:712.50px;font-size:16px;line-height:19px;color:#212529;">5/6/2018</span>
<span class="t" style="left:944px;top:712.50px;font-size:16px;line-height:19px;color:#212529;">1</span>
<span class="t" style="left:1108px;top:712.50px;font-size:16px;line-height:19px;color:#212529;">33</span>
<span class="t" style="left:1268px;top:712.50px;font-size:16px;line-height:19px;color:#212529;">Freezing</span>
<span class="t" style="left:781px;top:761.50px;font-size:16px;line-height:19px;color:#212529;">5/7/2018</span>
<span class="t" style="left:944px;top:761.50px;font-size:16px;line-height:19px;color:#212529;">14</span>
<span class="t" style="left:1108px;top:761.50px;font-size:16px;line-height:19px;color:#212529;">57</span>
<span class="t" style="left:1268px;top:761.50px;font-size:16px;line-height:19px;color:#212529;">Bracing</span>
<span class="t" style="left:781px;top:810.50px;font-size:16px;line-height:19px;color:#212529;">5/8/2018</span>
<span class="t" style="left:944px;top:810.50px;font-size:16px;line-height:19px;color:#212529;">-13</span>
<span class="t" style="left:1108px;top:810.50px;font-size:16px;line-height:19px;color:#212529;">9</span>
<span class="t" style="left:1268px;top:810.50px;font-size:16px;line-height:19px;color:#212529;">Freezing</span>
<span class="t" style="left:781px;top:859.50px;font-size:16px;line-height:19px;color:#212529;">5/9/2018</span>
<span class="t" style="left:944px;top:859.50px;font-size:16px;line-height:19px;color:#212529;">-16</span>
<span class="t" style="left:1108px;top:859.50px;font-size:16px;line-height:19px;color:#212529;">4</span>
<span class="t" style="left:1268px;top:859.50px;font-size:16px;line-height:19px;color:#212529;">Balmy</span>
<span class="t" style="left:781px;top:908.50px;font-size:16px;line-height:19px;color:#212529;">5/10/2018</span>
<span class="t" style="left:944px;top:908.50px;font-size:16px;line-height:19px;color:#212529;">-2</span>
<span class="t" style="left:1108px;top:908.50px;font-size:16px;line-height:19px;color:#212529;">29</span>
<span class="t" style="left:1268px;top:908.50px;font-size:16px;line-height:19px;color:#212529;">Chilly</span>
</body></html>
